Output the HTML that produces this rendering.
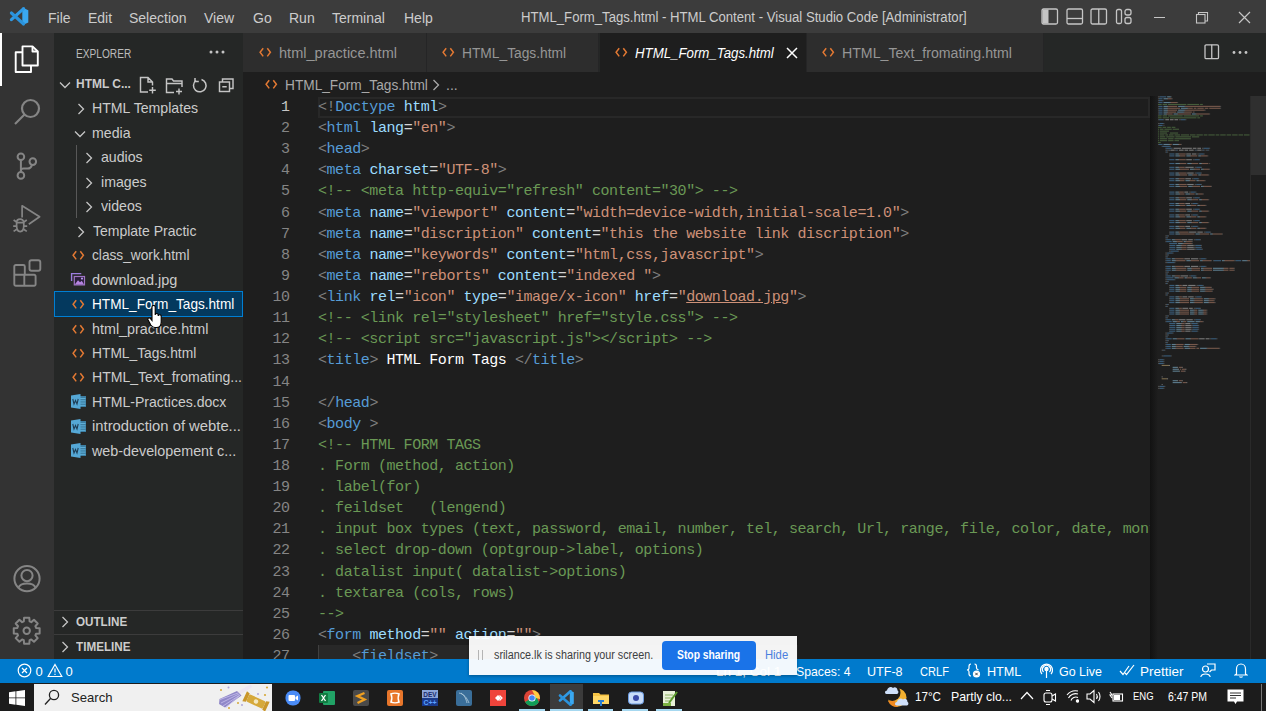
<!DOCTYPE html>
<html><head><meta charset="utf-8">
<style>
*{box-sizing:border-box}
html,body{margin:0;padding:0}
body{width:1266px;height:711px;overflow:hidden;position:relative;background:#1e1e1e;font-family:"Liberation Sans",sans-serif;color:#ccc}
.a{position:absolute;white-space:nowrap}
.ui{font-size:14px}
.mono{font-family:"Liberation Mono",monospace;font-size:15px;letter-spacing:-0.44px;white-space:pre}
</style></head><body>
<div class="a" style="left:0;top:0;width:1266px;height:33px;background:#3c3c3c"></div>
<svg class="a" style="left:0;top:0" width="34" height="33" viewBox="0 0 34 33"><path d="M22.3 7.4 L28.3 10.2 V22.4 L22.3 25.2 Z" fill="#3aa8f0"/><path d="M23.6 8.6 L11.4 19.6" stroke="#2f9be6" stroke-width="3.1" stroke-linecap="round"/><path d="M23.6 24 L11.4 13" stroke="#2b93dc" stroke-width="3.1" stroke-linecap="round"/></svg>
<span class="a" style="left:48px;top:9.5px;font-size:14px;color:#cccccc">File</span>
<span class="a" style="left:88px;top:9.5px;font-size:14px;color:#cccccc">Edit</span>
<span class="a" style="left:129px;top:9.5px;font-size:14px;color:#cccccc">Selection</span>
<span class="a" style="left:204px;top:9.5px;font-size:14px;color:#cccccc">View</span>
<span class="a" style="left:253px;top:9.5px;font-size:14px;color:#cccccc">Go</span>
<span class="a" style="left:289px;top:9.5px;font-size:14px;color:#cccccc">Run</span>
<span class="a" style="left:332px;top:9.5px;font-size:14px;color:#cccccc">Terminal</span>
<span class="a" style="left:404px;top:9.5px;font-size:14px;color:#cccccc">Help</span>
<span class="a" style="left:521px;top:9px;font-size:14px;color:#cccccc;transform:scaleX(0.9390);transform-origin:0 0">HTML_Form_Tags.html - HTML Content - Visual Studio Code [Administrator]</span>
<svg class="a" style="left:1041px;top:8px" width="18" height="17" viewBox="0 0 18 17" fill="none" stroke="#c5c5c5" stroke-width="1.3"><rect x="1" y="1" width="15.5" height="15" rx="1.5"/><rect x="1.5" y="1.5" width="6" height="14" fill="#c5c5c5" stroke="none"/></svg>
<svg class="a" style="left:1066px;top:8px" width="18" height="17" viewBox="0 0 18 17" fill="none" stroke="#c5c5c5" stroke-width="1.3"><rect x="1" y="1" width="15.5" height="15" rx="1.5"/><path d="M1 10.5 H16.5"/></svg>
<svg class="a" style="left:1090px;top:8px" width="18" height="17" viewBox="0 0 18 17" fill="none" stroke="#c5c5c5" stroke-width="1.3"><rect x="1" y="1" width="15.5" height="15" rx="1.5"/><path d="M8.75 1 V16"/></svg>
<svg class="a" style="left:1115px;top:8px" width="18" height="17" viewBox="0 0 18 17" fill="none" stroke="#c5c5c5" stroke-width="1.3"><rect x="1.5" y="1.5" width="5" height="14" rx="1.5"/><rect x="10" y="1.5" width="6" height="5.5" rx="2"/><rect x="10" y="9.5" width="6" height="6" rx="2"/></svg>
<div class="a" style="left:1154px;top:17px;width:11px;height:1px;background:#c5c5c5"></div>
<svg class="a" style="left:1195px;top:11px" width="14" height="13" viewBox="0 0 14 13" fill="none" stroke="#c5c5c5" stroke-width="1.1"><rect x="1.5" y="3.5" width="8.5" height="8.5"/><path d="M3.5 3.5 V1.5 H12.5 V10 H10"/></svg>
<svg class="a" style="left:1238px;top:11px" width="13" height="13" viewBox="0 0 13 13" stroke="#c5c5c5" stroke-width="1.2"><path d="M1 1 L12 12 M12 1 L1 12"/></svg>
<div class="a" style="left:0;top:33px;width:54px;height:626px;background:#333333"></div>
<div class="a" style="left:0;top:33px;width:2px;height:53px;background:#fff"></div>
<svg class="a" style="left:13px;top:43px" width="28" height="32" viewBox="0 0 28 32" fill="none" stroke="#fff" stroke-width="1.9" stroke-linejoin="round"><path d="M9.5 9.2 H2.7 V29 H18 V22.5"/><path d="M9.5 3.4 H19.5 L24.8 8.5 V22.5 H9.5 Z"/><path d="M19.5 3.4 V8.5 H24.8"/></svg>
<svg class="a" style="left:13px;top:97px" width="30" height="30" viewBox="0 0 30 30" fill="none" stroke="#858585" stroke-width="2.2" stroke-linejoin="round"><circle cx="17.5" cy="11.5" r="8.5"/><path d="M11.5 17.5 L2 27"/></svg>
<svg class="a" style="left:14px;top:151px" width="28" height="30" viewBox="0 0 28 30" fill="none" stroke="#858585" stroke-width="2.0" stroke-linejoin="round"><circle cx="6.9" cy="5.8" r="3.3"/><circle cx="6.9" cy="24.4" r="3.3"/><circle cx="18.8" cy="10.6" r="3.3"/><path d="M6.9 9.1 V21.1"/><path d="M18 13.9 C17.2 16.6 16 17.6 13.5 17.6 H9.5 C8 17.6 6.9 18.6 6.9 20"/></svg>
<svg class="a" style="left:12px;top:204px" width="32" height="30" viewBox="0 0 32 30" fill="none" stroke="#858585" stroke-width="1.7" stroke-linejoin="round"><path d="M10.1 13.4 V1.8 L27.6 12.8 L16.8 20.2"/><path d="M4.6 21.3 C4.6 25 6 27.6 8.2 27.6 C10.4 27.6 11.8 25 11.8 21.3 V18.8 C11.8 16.6 10.2 15.2 8.2 15.2 C6.2 15.2 4.6 16.6 4.6 18.8 Z"/><path d="M4.6 18.6 H11.8 M1.6 16 L4.6 18 M14.8 16 L11.8 18 M1.2 22.2 H4.6 M11.8 22.2 H15.2 M1.6 27.4 L4.8 25.2 M14.8 27.4 L11.6 25.2"/></svg>
<svg class="a" style="left:13px;top:257px" width="30" height="30" viewBox="0 0 30 30" fill="none" stroke="#858585" stroke-width="1.9" stroke-linejoin="round"><path d="M11.8 17.7 V9.5 a1.5 1.5 0 0 0 -1.5 -1.5 H2.8 a1.5 1.5 0 0 0 -1.5 1.5 V27.2 a1.5 1.5 0 0 0 1.5 1.5 H21.1 a1.5 1.5 0 0 0 1.5 -1.5 V19.2 a1.5 1.5 0 0 0 -1.5 -1.5 H1.3 M11.3 17.7 V28.7"/><rect x="16.5" y="3.2" width="10.8" height="10.6" rx="2"/></svg>
<svg class="a" style="left:11px;top:563px" width="32" height="32" viewBox="0 0 32 32" fill="none" stroke="#858585" stroke-width="2.0" stroke-linejoin="round"><circle cx="16" cy="15.6" r="12.6"/><circle cx="16" cy="12.6" r="5.6"/><path d="M7.5 24.6 C9.5 19.2 22.5 19.2 24.5 24.6"/></svg>
<svg class="a" style="left:11px;top:615px" width="32" height="32" viewBox="0 0 32 32" fill="none" stroke="#858585" stroke-width="2.0" stroke-linejoin="round"><path d="M12.80 6.44 L13.08 2.86 L18.32 2.86 L18.60 6.44 L20.27 7.13 L22.99 4.80 L26.70 8.51 L24.37 11.23 L25.06 12.90 L28.64 13.18 L28.64 18.42 L25.06 18.70 L24.37 20.37 L26.70 23.09 L22.99 26.80 L20.27 24.47 L18.60 25.16 L18.32 28.74 L13.08 28.74 L12.80 25.16 L11.13 24.47 L8.41 26.80 L4.70 23.09 L7.03 20.37 L6.34 18.70 L2.76 18.42 L2.76 13.18 L6.34 12.90 L7.03 11.23 L4.70 8.51 L8.41 4.80 L11.13 7.13 Z"/><circle cx="15.7" cy="15.8" r="3.2"/></svg>
<div class="a" style="left:54px;top:33px;width:189px;height:626px;background:#252726"></div>
<span class="a" style="left:76px;top:47px;font-size:12.5px;color:#bbbbbb;transform:scaleX(0.8118);transform-origin:0 0">EXPLORER</span>
<svg class="a" style="left:209px;top:49px" width="16" height="6" viewBox="0 0 16 6" fill="#c5c5c5"><circle cx="2" cy="3" r="1.5"/><circle cx="8" cy="3" r="1.5"/><circle cx="14" cy="3" r="1.5"/></svg>
<svg class="a" style="left:58px;top:80px" width="14" height="10" viewBox="0 0 14 10" fill="none" stroke="#c5c5c5" stroke-width="1.3"><path d="M2 2.5 L7 7.5 L12 2.5"/></svg>
<span class="a" style="left:76px;top:76px;font-size:13px;font-weight:bold;color:#cccccc;transform:scaleX(0.9190);transform-origin:0 0">HTML C...</span>
<svg class="a" style="left:139px;top:76px" width="18" height="18" viewBox="0 0 18 18" fill="none" stroke="#c5c5c5" stroke-width="1.45"><path d="M9 16 H1.5 V1.5 H9 L13.5 6 V9.5 M9 1.5 V6 H13.5 M13.5 11 V17.5 M10.2 14.2 H16.8"/></svg>
<svg class="a" style="left:165px;top:76.5px" width="19" height="18" viewBox="0 0 19 18" fill="none" stroke="#c5c5c5" stroke-width="1.45"><path d="M9 15.5 H1.5 V2 H7 L8.5 4 H17 V10 M1.5 6.5 H17 M14 11.5 V17.5 M11 14.5 H17"/></svg>
<svg class="a" style="left:192px;top:76.5px" width="16" height="17" viewBox="0 0 16 17" fill="none" stroke="#c5c5c5" stroke-width="1.5"><path d="M4 3.5 A6.3 6.3 0 1 0 9.5 2.5"/><path d="M3 1 V4.5 H6.8" /></svg>
<svg class="a" style="left:218px;top:76.5px" width="17" height="16" viewBox="0 0 17 16" fill="none" stroke="#c5c5c5" stroke-width="1.45"><rect x="1.5" y="5" width="10" height="9.5"/><path d="M4.5 5 V2 H15 V11.5 H11.5 M4.3 9.7 H8.7"/></svg>
<svg class="a" style="left:76px;top:102px" width="10" height="14" viewBox="0 0 10 14" fill="none" stroke="#c5c5c5" stroke-width="1.3"><path d="M2.5 2 L7.5 7 L2.5 12"/></svg>
<span class="a" style="left:92.3px;top:100.4px;font-size:14.8px;color:#cccccc;transform:scaleX(0.9554);transform-origin:0 0">HTML Templates</span>
<svg class="a" style="left:72.5px;top:129px" width="14" height="10" viewBox="0 0 14 10" fill="none" stroke="#c5c5c5" stroke-width="1.3"><path d="M2 2.5 L7 7.5 L12 2.5"/></svg>
<span class="a" style="left:92.3px;top:124.8px;font-size:14.8px;color:#cccccc;transform:scaleX(0.9557);transform-origin:0 0">media</span>
<svg class="a" style="left:84px;top:151px" width="10" height="14" viewBox="0 0 10 14" fill="none" stroke="#c5c5c5" stroke-width="1.3"><path d="M2.5 2 L7.5 7 L2.5 12"/></svg>
<span class="a" style="left:100.5px;top:149.3px;font-size:14.8px;color:#cccccc;transform:scaleX(0.9557);transform-origin:0 0">audios</span>
<svg class="a" style="left:84px;top:176px" width="10" height="14" viewBox="0 0 10 14" fill="none" stroke="#c5c5c5" stroke-width="1.3"><path d="M2.5 2 L7.5 7 L2.5 12"/></svg>
<span class="a" style="left:100.5px;top:173.7px;font-size:14.8px;color:#cccccc;transform:scaleX(0.9557);transform-origin:0 0">images</span>
<svg class="a" style="left:84px;top:200px" width="10" height="14" viewBox="0 0 10 14" fill="none" stroke="#c5c5c5" stroke-width="1.3"><path d="M2.5 2 L7.5 7 L2.5 12"/></svg>
<span class="a" style="left:100.5px;top:198.2px;font-size:14.8px;color:#cccccc;transform:scaleX(0.9557);transform-origin:0 0">videos</span>
<svg class="a" style="left:76px;top:225px" width="10" height="14" viewBox="0 0 10 14" fill="none" stroke="#c5c5c5" stroke-width="1.3"><path d="M2.5 2 L7.5 7 L2.5 12"/></svg>
<span class="a" style="left:92.7px;top:222.7px;font-size:14.8px;color:#cccccc;transform:scaleX(0.9460);transform-origin:0 0">Template Practic</span>
<svg class="a" style="left:71.5px;top:250px" width="13" height="11" viewBox="0 0 13 11" fill="none" stroke="#e37933" stroke-width="1.5"><path d="M4.2 1.2 L1.1 5.3 L4.2 9.4 M8.3 1.2 L11.4 5.3 L8.3 9.4"/></svg>
<span class="a" style="left:92.3px;top:247.1px;font-size:14.8px;color:#cccccc;transform:scaleX(0.9263);transform-origin:0 0">class_work.html</span>
<svg class="a" style="left:70px;top:272px" width="16" height="14" viewBox="0 0 16 14"><path d="M1.6 9 V1.6 H11.3" fill="none" stroke="#9c7ee0" stroke-width="1.4"/><rect x="4.3" y="4.5" width="10.2" height="8.4" fill="#2a1f3a" stroke="#a074c4" stroke-width="1.2"/><path d="M4.8 12.4 L8 8.3 L10 10.2 L11.8 8.8 L14 12.4 Z" fill="#b583e0"/><circle cx="12" cy="6.6" r="1.1" fill="#b898f0"/></svg>
<span class="a" style="left:92.3px;top:271.6px;font-size:14.8px;color:#cccccc;transform:scaleX(0.9786);transform-origin:0 0">download.jpg</span>
<div class="a" style="left:54px;top:291.0px;width:189px;height:26px;background:#04395e;border:1px solid #007fd4"></div>
<svg class="a" style="left:71.5px;top:299px" width="13" height="11" viewBox="0 0 13 11" fill="none" stroke="#e37933" stroke-width="1.5"><path d="M4.2 1.2 L1.1 5.3 L4.2 9.4 M8.3 1.2 L11.4 5.3 L8.3 9.4"/></svg>
<span class="a" style="left:92.3px;top:296.0px;font-size:14.8px;color:#ffffff;transform:scaleX(0.9204);transform-origin:0 0">HTML_Form_Tags.html</span>
<svg class="a" style="left:71.5px;top:324px" width="13" height="11" viewBox="0 0 13 11" fill="none" stroke="#e37933" stroke-width="1.5"><path d="M4.2 1.2 L1.1 5.3 L4.2 9.4 M8.3 1.2 L11.4 5.3 L8.3 9.4"/></svg>
<span class="a" style="left:92.3px;top:320.5px;font-size:14.8px;color:#cccccc;transform:scaleX(0.9692);transform-origin:0 0">html_practice.html</span>
<svg class="a" style="left:71.5px;top:348px" width="13" height="11" viewBox="0 0 13 11" fill="none" stroke="#e37933" stroke-width="1.5"><path d="M4.2 1.2 L1.1 5.3 L4.2 9.4 M8.3 1.2 L11.4 5.3 L8.3 9.4"/></svg>
<span class="a" style="left:92.3px;top:345.0px;font-size:14.8px;color:#cccccc;transform:scaleX(0.9319);transform-origin:0 0">HTML_Tags.html</span>
<svg class="a" style="left:71.5px;top:372px" width="13" height="11" viewBox="0 0 13 11" fill="none" stroke="#e37933" stroke-width="1.5"><path d="M4.2 1.2 L1.1 5.3 L4.2 9.4 M8.3 1.2 L11.4 5.3 L8.3 9.4"/></svg>
<span class="a" style="left:92.3px;top:369.4px;font-size:14.8px;color:#cccccc;transform:scaleX(0.9500);transform-origin:0 0">HTML_Text_fromating...</span>
<svg class="a" style="left:70.5px;top:394px" width="16" height="15" viewBox="0 0 16 15"><rect x="8" y="2" width="7" height="11" fill="#3d7fa3"/><path d="M9 4.5 H14.5 M9 6.8 H14.5 M9 9.1 H14.5 M9 11.4 H14.5" stroke="#5fb0d8" stroke-width="1"/><path d="M0 1.6 L9.5 0 V15 L0 13.4 Z" fill="#55a8d6"/><path d="M1.8 5 L3 10 L4.5 6.5 L6 10 L7.2 5" stroke="#1f3f58" stroke-width="1.1" fill="none"/></svg>
<span class="a" style="left:92.3px;top:393.9px;font-size:14.8px;color:#cccccc;transform:scaleX(0.9500);transform-origin:0 0">HTML-Practices.docx</span>
<svg class="a" style="left:70.5px;top:419px" width="16" height="15" viewBox="0 0 16 15"><rect x="8" y="2" width="7" height="11" fill="#3d7fa3"/><path d="M9 4.5 H14.5 M9 6.8 H14.5 M9 9.1 H14.5 M9 11.4 H14.5" stroke="#5fb0d8" stroke-width="1"/><path d="M0 1.6 L9.5 0 V15 L0 13.4 Z" fill="#55a8d6"/><path d="M1.8 5 L3 10 L4.5 6.5 L6 10 L7.2 5" stroke="#1f3f58" stroke-width="1.1" fill="none"/></svg>
<span class="a" style="left:92.3px;top:418.3px;font-size:14.8px;color:#cccccc;transform:scaleX(1.0005);transform-origin:0 0">introduction of webte...</span>
<svg class="a" style="left:70.5px;top:443px" width="16" height="15" viewBox="0 0 16 15"><rect x="8" y="2" width="7" height="11" fill="#3d7fa3"/><path d="M9 4.5 H14.5 M9 6.8 H14.5 M9 9.1 H14.5 M9 11.4 H14.5" stroke="#5fb0d8" stroke-width="1"/><path d="M0 1.6 L9.5 0 V15 L0 13.4 Z" fill="#55a8d6"/><path d="M1.8 5 L3 10 L4.5 6.5 L6 10 L7.2 5" stroke="#1f3f58" stroke-width="1.1" fill="none"/></svg>
<span class="a" style="left:92.3px;top:442.8px;font-size:14.8px;color:#cccccc;transform:scaleX(0.9681);transform-origin:0 0">web-developement c...</span>
<div class="a" style="left:76px;top:145px;width:1px;height:73px;background:#585858"></div>
<svg class="a" style="left:147px;top:305px" width="18" height="24" viewBox="0 0 18 24"><path d="M5 2 a1.6 1.6 0 0 1 3.2 0 V10 a1.5 1.5 0 0 1 3 0 V11 a1.5 1.5 0 0 1 3 0.5 V17 C14.2 20.5 12.5 22.5 9.5 22.5 H8 C5.8 22.5 4.8 21.5 3.8 20 L1 14.8 a1.4 1.4 0 0 1 2.3-1.5 L5 15.5 Z" fill="#fff" stroke="#000" stroke-width="1.1"/></svg>
<div class="a" style="left:54px;top:610px;width:189px;height:1px;background:#3c3c3c"></div>
<div class="a" style="left:54px;top:634px;width:189px;height:1px;background:#3c3c3c"></div>
<svg class="a" style="left:60px;top:615px" width="10" height="14" viewBox="0 0 10 14" fill="none" stroke="#c5c5c5" stroke-width="1.3"><path d="M2.5 2 L7.5 7 L2.5 12"/></svg>
<span class="a" style="left:75.5px;top:615px;font-size:12.5px;font-weight:bold;color:#cccccc;transform:scaleX(0.9330);transform-origin:0 0">OUTLINE</span>
<svg class="a" style="left:60px;top:640px" width="10" height="14" viewBox="0 0 10 14" fill="none" stroke="#c5c5c5" stroke-width="1.3"><path d="M2.5 2 L7.5 7 L2.5 12"/></svg>
<span class="a" style="left:76.3px;top:640px;font-size:12.5px;font-weight:bold;color:#cccccc;transform:scaleX(0.9353);transform-origin:0 0">TIMELINE</span>
<div class="a" style="left:243px;top:33px;width:1023px;height:39px;background:#252726"></div>
<div class="a" style="left:243px;top:33px;width:183.7px;height:39px;background:#2d2d2d;border-right:1px solid #252526"></div>
<svg class="a" style="left:258.5px;top:47px" width="13" height="11" viewBox="0 0 13 11" fill="none" stroke="#e37933" stroke-width="1.5"><path d="M4.2 1.2 L1.1 5.3 L4.2 9.4 M8.3 1.2 L11.4 5.3 L8.3 9.4"/></svg>
<span class="a" style="left:278.5px;top:45px;font-size:14px;color:#969696;transform:scaleX(1.0387);transform-origin:0 0">html_practice.html</span>
<div class="a" style="left:426.7px;top:33px;width:172.8px;height:39px;background:#2d2d2d;border-right:1px solid #252526"></div>
<svg class="a" style="left:442.2px;top:47px" width="13" height="11" viewBox="0 0 13 11" fill="none" stroke="#e37933" stroke-width="1.5"><path d="M4.2 1.2 L1.1 5.3 L4.2 9.4 M8.3 1.2 L11.4 5.3 L8.3 9.4"/></svg>
<span class="a" style="left:462.2px;top:45px;font-size:14px;color:#969696;transform:scaleX(0.9840);transform-origin:0 0">HTML_Tags.html</span>
<div class="a" style="left:599.5px;top:33px;width:207px;height:39px;background:#1e1e1e;border-right:1px solid #252526"></div>
<svg class="a" style="left:615.0px;top:47px" width="13" height="11" viewBox="0 0 13 11" fill="none" stroke="#e37933" stroke-width="1.5"><path d="M4.2 1.2 L1.1 5.3 L4.2 9.4 M8.3 1.2 L11.4 5.3 L8.3 9.4"/></svg>
<span class="a" style="left:635.0px;top:45px;font-size:14px;color:#ffffff;font-style:italic;transform:scaleX(0.947);transform-origin:0 0">HTML_Form_Tags.html</span>
<svg class="a" style="left:785.5px;top:47px" width="12" height="12" viewBox="0 0 12 12" stroke="#fff" stroke-width="1.5"><path d="M1 1 L11 11 M11 1 L1 11"/></svg>
<div class="a" style="left:806.5px;top:33px;width:237.5px;height:39px;background:#2d2d2d;border-right:1px solid #252526"></div>
<svg class="a" style="left:822.0px;top:47px" width="13" height="11" viewBox="0 0 13 11" fill="none" stroke="#e37933" stroke-width="1.5"><path d="M4.2 1.2 L1.1 5.3 L4.2 9.4 M8.3 1.2 L11.4 5.3 L8.3 9.4"/></svg>
<span class="a" style="left:842.0px;top:45px;font-size:14px;color:#969696;transform:scaleX(1.0110);transform-origin:0 0">HTML_Text_fromating.html</span>
<svg class="a" style="left:1204px;top:44px" width="16" height="16" viewBox="0 0 16 16" fill="none" stroke="#c5c5c5" stroke-width="1.3"><rect x="1" y="0.8" width="13.5" height="13.8" rx="1.2"/><path d="M7.75 0.8 V14.6"/></svg>
<svg class="a" style="left:1232px;top:50px" width="16" height="5" viewBox="0 0 16 5" fill="#c5c5c5"><circle cx="2" cy="2.5" r="1.4"/><circle cx="8" cy="2.5" r="1.4"/><circle cx="14" cy="2.5" r="1.4"/></svg>
<svg class="a" style="left:265px;top:79px" width="13" height="11" viewBox="0 0 13 11" fill="none" stroke="#e37933" stroke-width="1.5"><path d="M4.2 1.2 L1.1 5.3 L4.2 9.4 M8.3 1.2 L11.4 5.3 L8.3 9.4"/></svg>
<span class="a" style="left:285px;top:77px;font-size:14px;color:#a9a9a9;transform:scaleX(0.977);transform-origin:0 0">HTML_Form_Tags.html</span>
<svg class="a" style="left:432px;top:79px" width="8" height="12" viewBox="0 0 8 12" fill="none" stroke="#a9a9a9" stroke-width="1.3"><path d="M1.5 1 L6.5 6 L1.5 11"/></svg>
<span class="a" style="left:446px;top:77px;font-size:14px;color:#a9a9a9">...</span>
<div class="a" style="left:318px;top:96.5px;width:832px;height:21px;border:2px solid #282828"></div>
<div class="a" style="left:318px;top:644.8px;width:480px;height:21.1px;background:#282828"></div>
<div class="a" style="left:318px;top:644.8px;width:1px;height:21.1px;background:#404040"></div>
<div class="a mono" style="left:241.5px;width:48px;text-align:right;top:96.95px;line-height:21.12px;color:#c6c6c6">1</div>
<div class="a mono" style="left:318.0px;top:96.95px;line-height:21.12px;width:832px;overflow:hidden"><span style="color:#808080">&lt;!</span><span style="color:#569cd6">Doctype</span><span style="color:#d4d4d4"> </span><span style="color:#9cdcfe">html</span><span style="color:#808080">&gt;</span></div>
<div class="a mono" style="left:241.5px;width:48px;text-align:right;top:118.07px;line-height:21.12px;color:#858585">2</div>
<div class="a mono" style="left:318.0px;top:118.07px;line-height:21.12px;width:832px;overflow:hidden"><span style="color:#808080">&lt;</span><span style="color:#569cd6">html</span><span style="color:#d4d4d4"> </span><span style="color:#9cdcfe">lang</span><span style="color:#d4d4d4">=</span><span style="color:#ce9178">&quot;en&quot;</span><span style="color:#808080">&gt;</span></div>
<div class="a mono" style="left:241.5px;width:48px;text-align:right;top:139.19px;line-height:21.12px;color:#858585">3</div>
<div class="a mono" style="left:318.0px;top:139.19px;line-height:21.12px;width:832px;overflow:hidden"><span style="color:#808080">&lt;</span><span style="color:#569cd6">head</span><span style="color:#808080">&gt;</span></div>
<div class="a mono" style="left:241.5px;width:48px;text-align:right;top:160.31px;line-height:21.12px;color:#858585">4</div>
<div class="a mono" style="left:318.0px;top:160.31px;line-height:21.12px;width:832px;overflow:hidden"><span style="color:#808080">&lt;</span><span style="color:#569cd6">meta</span><span style="color:#d4d4d4"> </span><span style="color:#9cdcfe">charset</span><span style="color:#d4d4d4">=</span><span style="color:#ce9178">&quot;UTF-8&quot;</span><span style="color:#808080">&gt;</span></div>
<div class="a mono" style="left:241.5px;width:48px;text-align:right;top:181.43px;line-height:21.12px;color:#858585">5</div>
<div class="a mono" style="left:318.0px;top:181.43px;line-height:21.12px;width:832px;overflow:hidden"><span style="color:#6a9955">&lt;!-- &lt;meta http-equiv=&quot;refresh&quot; content=&quot;30&quot;&gt; --&gt;</span></div>
<div class="a mono" style="left:241.5px;width:48px;text-align:right;top:202.55px;line-height:21.12px;color:#858585">6</div>
<div class="a mono" style="left:318.0px;top:202.55px;line-height:21.12px;width:832px;overflow:hidden"><span style="color:#808080">&lt;</span><span style="color:#569cd6">meta</span><span style="color:#d4d4d4"> </span><span style="color:#9cdcfe">name</span><span style="color:#d4d4d4">=</span><span style="color:#ce9178">&quot;viewport&quot;</span><span style="color:#d4d4d4"> </span><span style="color:#9cdcfe">content</span><span style="color:#d4d4d4">=</span><span style="color:#ce9178">&quot;width=device-width,initial-scale=1.0&quot;</span><span style="color:#808080">&gt;</span></div>
<div class="a mono" style="left:241.5px;width:48px;text-align:right;top:223.67px;line-height:21.12px;color:#858585">7</div>
<div class="a mono" style="left:318.0px;top:223.67px;line-height:21.12px;width:832px;overflow:hidden"><span style="color:#808080">&lt;</span><span style="color:#569cd6">meta</span><span style="color:#d4d4d4"> </span><span style="color:#9cdcfe">name</span><span style="color:#d4d4d4">=</span><span style="color:#ce9178">&quot;discription&quot;</span><span style="color:#d4d4d4"> </span><span style="color:#9cdcfe">content</span><span style="color:#d4d4d4">=</span><span style="color:#ce9178">&quot;this the website link discription&quot;</span><span style="color:#808080">&gt;</span></div>
<div class="a mono" style="left:241.5px;width:48px;text-align:right;top:244.79px;line-height:21.12px;color:#858585">8</div>
<div class="a mono" style="left:318.0px;top:244.79px;line-height:21.12px;width:832px;overflow:hidden"><span style="color:#808080">&lt;</span><span style="color:#569cd6">meta</span><span style="color:#d4d4d4"> </span><span style="color:#9cdcfe">name</span><span style="color:#d4d4d4">=</span><span style="color:#ce9178">&quot;keywords&quot;</span><span style="color:#d4d4d4"> </span><span style="color:#9cdcfe">content</span><span style="color:#d4d4d4">=</span><span style="color:#ce9178">&quot;html,css,javascript&quot;</span><span style="color:#808080">&gt;</span></div>
<div class="a mono" style="left:241.5px;width:48px;text-align:right;top:265.91px;line-height:21.12px;color:#858585">9</div>
<div class="a mono" style="left:318.0px;top:265.91px;line-height:21.12px;width:832px;overflow:hidden"><span style="color:#808080">&lt;</span><span style="color:#569cd6">meta</span><span style="color:#d4d4d4"> </span><span style="color:#9cdcfe">name</span><span style="color:#d4d4d4">=</span><span style="color:#ce9178">&quot;reborts&quot;</span><span style="color:#d4d4d4"> </span><span style="color:#9cdcfe">content</span><span style="color:#d4d4d4">=</span><span style="color:#ce9178">&quot;indexed &quot;</span><span style="color:#808080">&gt;</span></div>
<div class="a mono" style="left:241.5px;width:48px;text-align:right;top:287.03px;line-height:21.12px;color:#858585">10</div>
<div class="a mono" style="left:318.0px;top:287.03px;line-height:21.12px;width:832px;overflow:hidden"><span style="color:#808080">&lt;</span><span style="color:#569cd6">link</span><span style="color:#d4d4d4"> </span><span style="color:#9cdcfe">rel</span><span style="color:#d4d4d4">=</span><span style="color:#ce9178">&quot;icon&quot;</span><span style="color:#d4d4d4"> </span><span style="color:#9cdcfe">type</span><span style="color:#d4d4d4">=</span><span style="color:#ce9178">&quot;image/x-icon&quot;</span><span style="color:#d4d4d4"> </span><span style="color:#9cdcfe">href</span><span style="color:#d4d4d4">=</span><span style="color:#ce9178">"<span style="text-decoration:underline">download.jpg</span>"</span><span style="color:#808080">&gt;</span></div>
<div class="a mono" style="left:241.5px;width:48px;text-align:right;top:308.15px;line-height:21.12px;color:#858585">11</div>
<div class="a mono" style="left:318.0px;top:308.15px;line-height:21.12px;width:832px;overflow:hidden"><span style="color:#6a9955">&lt;!-- &lt;link rel=&quot;stylesheet&quot; href=&quot;style.css&quot;&gt; --&gt;</span></div>
<div class="a mono" style="left:241.5px;width:48px;text-align:right;top:329.27px;line-height:21.12px;color:#858585">12</div>
<div class="a mono" style="left:318.0px;top:329.27px;line-height:21.12px;width:832px;overflow:hidden"><span style="color:#6a9955">&lt;!-- &lt;script src=&quot;javascript.js&quot;&gt;&lt;/script&gt; --&gt;</span></div>
<div class="a mono" style="left:241.5px;width:48px;text-align:right;top:350.39px;line-height:21.12px;color:#858585">13</div>
<div class="a mono" style="left:318.0px;top:350.39px;line-height:21.12px;width:832px;overflow:hidden"><span style="color:#808080">&lt;</span><span style="color:#569cd6">title</span><span style="color:#808080">&gt;</span><span style="color:#ffffff"> HTML Form Tags </span><span style="color:#808080">&lt;/</span><span style="color:#569cd6">title</span><span style="color:#808080">&gt;</span></div>
<div class="a mono" style="left:241.5px;width:48px;text-align:right;top:371.51px;line-height:21.12px;color:#858585">14</div>
<div class="a mono" style="left:318.0px;top:371.51px;line-height:21.12px;width:832px;overflow:hidden"></div>
<div class="a mono" style="left:241.5px;width:48px;text-align:right;top:392.63px;line-height:21.12px;color:#858585">15</div>
<div class="a mono" style="left:318.0px;top:392.63px;line-height:21.12px;width:832px;overflow:hidden"><span style="color:#808080">&lt;/</span><span style="color:#569cd6">head</span><span style="color:#808080">&gt;</span></div>
<div class="a mono" style="left:241.5px;width:48px;text-align:right;top:413.75px;line-height:21.12px;color:#858585">16</div>
<div class="a mono" style="left:318.0px;top:413.75px;line-height:21.12px;width:832px;overflow:hidden"><span style="color:#808080">&lt;</span><span style="color:#569cd6">body</span><span style="color:#d4d4d4"> </span><span style="color:#808080">&gt;</span></div>
<div class="a mono" style="left:241.5px;width:48px;text-align:right;top:434.87px;line-height:21.12px;color:#858585">17</div>
<div class="a mono" style="left:318.0px;top:434.87px;line-height:21.12px;width:832px;overflow:hidden"><span style="color:#6a9955">&lt;!-- HTML FORM TAGS</span></div>
<div class="a mono" style="left:241.5px;width:48px;text-align:right;top:455.99px;line-height:21.12px;color:#858585">18</div>
<div class="a mono" style="left:318.0px;top:455.99px;line-height:21.12px;width:832px;overflow:hidden"><span style="color:#6a9955">. Form (method, action)</span></div>
<div class="a mono" style="left:241.5px;width:48px;text-align:right;top:477.11px;line-height:21.12px;color:#858585">19</div>
<div class="a mono" style="left:318.0px;top:477.11px;line-height:21.12px;width:832px;overflow:hidden"><span style="color:#6a9955">. label(for)</span></div>
<div class="a mono" style="left:241.5px;width:48px;text-align:right;top:498.23px;line-height:21.12px;color:#858585">20</div>
<div class="a mono" style="left:318.0px;top:498.23px;line-height:21.12px;width:832px;overflow:hidden"><span style="color:#6a9955">. feildset   (lengend)</span></div>
<div class="a mono" style="left:241.5px;width:48px;text-align:right;top:519.35px;line-height:21.12px;color:#858585">21</div>
<div class="a mono" style="left:318.0px;top:519.35px;line-height:21.12px;width:832px;overflow:hidden"><span style="color:#6a9955">. input box types (text, password, email, number, tel, search, Url, range, file, color, date, month, week, time, datetime)</span></div>
<div class="a mono" style="left:241.5px;width:48px;text-align:right;top:540.47px;line-height:21.12px;color:#858585">22</div>
<div class="a mono" style="left:318.0px;top:540.47px;line-height:21.12px;width:832px;overflow:hidden"><span style="color:#6a9955">. select drop-down (optgroup-&gt;label, options)</span></div>
<div class="a mono" style="left:241.5px;width:48px;text-align:right;top:561.59px;line-height:21.12px;color:#858585">23</div>
<div class="a mono" style="left:318.0px;top:561.59px;line-height:21.12px;width:832px;overflow:hidden"><span style="color:#6a9955">. datalist input( datalist-&gt;options)</span></div>
<div class="a mono" style="left:241.5px;width:48px;text-align:right;top:582.71px;line-height:21.12px;color:#858585">24</div>
<div class="a mono" style="left:318.0px;top:582.71px;line-height:21.12px;width:832px;overflow:hidden"><span style="color:#6a9955">. textarea (cols, rows)</span></div>
<div class="a mono" style="left:241.5px;width:48px;text-align:right;top:603.83px;line-height:21.12px;color:#858585">25</div>
<div class="a mono" style="left:318.0px;top:603.83px;line-height:21.12px;width:832px;overflow:hidden"><span style="color:#6a9955">--&gt;</span></div>
<div class="a mono" style="left:241.5px;width:48px;text-align:right;top:624.95px;line-height:21.12px;color:#858585">26</div>
<div class="a mono" style="left:318.0px;top:624.95px;line-height:21.12px;width:832px;overflow:hidden"><span style="color:#808080">&lt;</span><span style="color:#569cd6">form</span><span style="color:#d4d4d4"> </span><span style="color:#9cdcfe">method</span><span style="color:#d4d4d4">=</span><span style="color:#ce9178">&quot;&quot;</span><span style="color:#d4d4d4"> </span><span style="color:#9cdcfe">action</span><span style="color:#d4d4d4">=</span><span style="color:#ce9178">&quot;&quot;</span><span style="color:#808080">&gt;</span></div>
<div class="a mono" style="left:241.5px;width:48px;text-align:right;top:646.07px;line-height:21.12px;color:#858585">27</div>
<div class="a mono" style="left:318.0px;top:646.07px;line-height:21.12px;width:832px;overflow:hidden"><span style="color:#d4d4d4">    </span><span style="color:#808080">&lt;</span><span style="color:#569cd6">fieldset</span><span style="color:#808080">&gt;</span></div>
<div class="a" style="left:1150px;top:96px;width:8px;height:563px;background:linear-gradient(to right,#121212,#1e1e1e)"></div>
<svg class="a" style="left:1158px;top:96px" width="92" height="320" viewBox="0 0 92 320"><rect x="0.00" y="0.30" width="1.83" height="1.1" fill="#808080" opacity="0.5"/><rect x="1.83" y="0.30" width="6.41" height="1.1" fill="#569cd6" opacity="0.5"/><rect x="9.15" y="0.30" width="3.66" height="1.1" fill="#9cdcfe" opacity="0.5"/><rect x="12.81" y="0.30" width="0.92" height="1.1" fill="#808080" opacity="0.5"/><rect x="0.00" y="2.21" width="0.92" height="1.1" fill="#808080" opacity="0.5"/><rect x="0.92" y="2.21" width="3.66" height="1.1" fill="#569cd6" opacity="0.5"/><rect x="5.49" y="2.21" width="3.66" height="1.1" fill="#9cdcfe" opacity="0.5"/><rect x="9.15" y="2.21" width="0.92" height="1.1" fill="#d4d4d4" opacity="0.5"/><rect x="10.07" y="2.21" width="3.66" height="1.1" fill="#ce9178" opacity="0.5"/><rect x="13.73" y="2.21" width="0.92" height="1.1" fill="#808080" opacity="0.5"/><rect x="0.00" y="4.11" width="0.92" height="1.1" fill="#808080" opacity="0.5"/><rect x="0.92" y="4.11" width="3.66" height="1.1" fill="#569cd6" opacity="0.5"/><rect x="4.58" y="4.11" width="0.92" height="1.1" fill="#808080" opacity="0.5"/><rect x="0.00" y="6.01" width="0.92" height="1.1" fill="#808080" opacity="0.5"/><rect x="0.92" y="6.01" width="3.66" height="1.1" fill="#569cd6" opacity="0.5"/><rect x="5.49" y="6.01" width="6.41" height="1.1" fill="#9cdcfe" opacity="0.5"/><rect x="11.89" y="6.01" width="0.92" height="1.1" fill="#d4d4d4" opacity="0.5"/><rect x="12.81" y="6.01" width="6.41" height="1.1" fill="#ce9178" opacity="0.5"/><rect x="19.21" y="6.01" width="0.92" height="1.1" fill="#808080" opacity="0.5"/><rect x="0.00" y="7.92" width="3.66" height="1.1" fill="#6a9955" opacity="0.5"/><rect x="4.58" y="7.92" width="4.58" height="1.1" fill="#6a9955" opacity="0.5"/><rect x="10.07" y="7.92" width="18.30" height="1.1" fill="#6a9955" opacity="0.5"/><rect x="29.28" y="7.92" width="11.89" height="1.1" fill="#6a9955" opacity="0.5"/><rect x="42.09" y="7.92" width="2.75" height="1.1" fill="#6a9955" opacity="0.5"/><rect x="0.00" y="9.83" width="0.92" height="1.1" fill="#808080" opacity="0.5"/><rect x="0.92" y="9.83" width="3.66" height="1.1" fill="#569cd6" opacity="0.5"/><rect x="5.49" y="9.83" width="3.66" height="1.1" fill="#9cdcfe" opacity="0.5"/><rect x="9.15" y="9.83" width="0.92" height="1.1" fill="#d4d4d4" opacity="0.5"/><rect x="10.07" y="9.83" width="9.15" height="1.1" fill="#ce9178" opacity="0.5"/><rect x="20.13" y="9.83" width="6.41" height="1.1" fill="#9cdcfe" opacity="0.5"/><rect x="26.54" y="9.83" width="0.92" height="1.1" fill="#d4d4d4" opacity="0.5"/><rect x="27.45" y="9.83" width="34.77" height="1.1" fill="#ce9178" opacity="0.5"/><rect x="62.22" y="9.83" width="0.92" height="1.1" fill="#808080" opacity="0.5"/><rect x="0.00" y="11.73" width="0.92" height="1.1" fill="#808080" opacity="0.5"/><rect x="0.92" y="11.73" width="3.66" height="1.1" fill="#569cd6" opacity="0.5"/><rect x="5.49" y="11.73" width="3.66" height="1.1" fill="#9cdcfe" opacity="0.5"/><rect x="9.15" y="11.73" width="0.92" height="1.1" fill="#d4d4d4" opacity="0.5"/><rect x="10.07" y="11.73" width="11.89" height="1.1" fill="#ce9178" opacity="0.5"/><rect x="22.88" y="11.73" width="6.41" height="1.1" fill="#9cdcfe" opacity="0.5"/><rect x="29.28" y="11.73" width="0.92" height="1.1" fill="#d4d4d4" opacity="0.5"/><rect x="30.20" y="11.73" width="4.58" height="1.1" fill="#ce9178" opacity="0.5"/><rect x="35.69" y="11.73" width="2.75" height="1.1" fill="#ce9178" opacity="0.5"/><rect x="39.34" y="11.73" width="6.41" height="1.1" fill="#ce9178" opacity="0.5"/><rect x="46.66" y="11.73" width="3.66" height="1.1" fill="#ce9178" opacity="0.5"/><rect x="51.24" y="11.73" width="10.98" height="1.1" fill="#ce9178" opacity="0.5"/><rect x="62.22" y="11.73" width="0.92" height="1.1" fill="#808080" opacity="0.5"/><rect x="0.00" y="13.64" width="0.92" height="1.1" fill="#808080" opacity="0.5"/><rect x="0.92" y="13.64" width="3.66" height="1.1" fill="#569cd6" opacity="0.5"/><rect x="5.49" y="13.64" width="3.66" height="1.1" fill="#9cdcfe" opacity="0.5"/><rect x="9.15" y="13.64" width="0.92" height="1.1" fill="#d4d4d4" opacity="0.5"/><rect x="10.07" y="13.64" width="9.15" height="1.1" fill="#ce9178" opacity="0.5"/><rect x="20.13" y="13.64" width="6.41" height="1.1" fill="#9cdcfe" opacity="0.5"/><rect x="26.54" y="13.64" width="0.92" height="1.1" fill="#d4d4d4" opacity="0.5"/><rect x="27.45" y="13.64" width="19.21" height="1.1" fill="#ce9178" opacity="0.5"/><rect x="46.66" y="13.64" width="0.92" height="1.1" fill="#808080" opacity="0.5"/><rect x="0.00" y="15.54" width="0.92" height="1.1" fill="#808080" opacity="0.5"/><rect x="0.92" y="15.54" width="3.66" height="1.1" fill="#569cd6" opacity="0.5"/><rect x="5.49" y="15.54" width="3.66" height="1.1" fill="#9cdcfe" opacity="0.5"/><rect x="9.15" y="15.54" width="0.92" height="1.1" fill="#d4d4d4" opacity="0.5"/><rect x="10.07" y="15.54" width="8.23" height="1.1" fill="#ce9178" opacity="0.5"/><rect x="19.21" y="15.54" width="6.41" height="1.1" fill="#9cdcfe" opacity="0.5"/><rect x="25.62" y="15.54" width="0.92" height="1.1" fill="#d4d4d4" opacity="0.5"/><rect x="26.54" y="15.54" width="7.32" height="1.1" fill="#ce9178" opacity="0.5"/><rect x="34.77" y="15.54" width="0.92" height="1.1" fill="#ce9178" opacity="0.5"/><rect x="35.69" y="15.54" width="0.92" height="1.1" fill="#808080" opacity="0.5"/><rect x="0.00" y="17.45" width="0.92" height="1.1" fill="#808080" opacity="0.5"/><rect x="0.92" y="17.45" width="3.66" height="1.1" fill="#569cd6" opacity="0.5"/><rect x="5.49" y="17.45" width="2.75" height="1.1" fill="#9cdcfe" opacity="0.5"/><rect x="8.23" y="17.45" width="0.92" height="1.1" fill="#d4d4d4" opacity="0.5"/><rect x="9.15" y="17.45" width="5.49" height="1.1" fill="#ce9178" opacity="0.5"/><rect x="15.55" y="17.45" width="3.66" height="1.1" fill="#9cdcfe" opacity="0.5"/><rect x="19.21" y="17.45" width="0.92" height="1.1" fill="#d4d4d4" opacity="0.5"/><rect x="20.13" y="17.45" width="12.81" height="1.1" fill="#ce9178" opacity="0.5"/><rect x="33.86" y="17.45" width="3.66" height="1.1" fill="#9cdcfe" opacity="0.5"/><rect x="37.52" y="17.45" width="0.92" height="1.1" fill="#d4d4d4" opacity="0.5"/><rect x="38.43" y="17.45" width="12.81" height="1.1" fill="#ce9178" opacity="0.5"/><rect x="51.24" y="17.45" width="0.92" height="1.1" fill="#808080" opacity="0.5"/><rect x="0.00" y="19.35" width="3.66" height="1.1" fill="#6a9955" opacity="0.5"/><rect x="4.58" y="19.35" width="4.58" height="1.1" fill="#6a9955" opacity="0.5"/><rect x="10.07" y="19.35" width="14.64" height="1.1" fill="#6a9955" opacity="0.5"/><rect x="25.62" y="19.35" width="15.55" height="1.1" fill="#6a9955" opacity="0.5"/><rect x="42.09" y="19.35" width="2.75" height="1.1" fill="#6a9955" opacity="0.5"/><rect x="0.00" y="21.26" width="3.66" height="1.1" fill="#6a9955" opacity="0.5"/><rect x="4.58" y="21.26" width="6.41" height="1.1" fill="#6a9955" opacity="0.5"/><rect x="11.89" y="21.26" width="26.54" height="1.1" fill="#6a9955" opacity="0.5"/><rect x="39.34" y="21.26" width="2.75" height="1.1" fill="#6a9955" opacity="0.5"/><rect x="0.00" y="23.16" width="0.92" height="1.1" fill="#808080" opacity="0.5"/><rect x="0.92" y="23.16" width="4.58" height="1.1" fill="#569cd6" opacity="0.5"/><rect x="5.49" y="23.16" width="0.92" height="1.1" fill="#808080" opacity="0.5"/><rect x="7.32" y="23.16" width="3.66" height="1.1" fill="#d4d4d4" opacity="0.5"/><rect x="11.89" y="23.16" width="3.66" height="1.1" fill="#d4d4d4" opacity="0.5"/><rect x="16.47" y="23.16" width="3.66" height="1.1" fill="#d4d4d4" opacity="0.5"/><rect x="21.05" y="23.16" width="1.83" height="1.1" fill="#808080" opacity="0.5"/><rect x="22.88" y="23.16" width="4.58" height="1.1" fill="#569cd6" opacity="0.5"/><rect x="27.45" y="23.16" width="0.92" height="1.1" fill="#808080" opacity="0.5"/><rect x="0.00" y="26.97" width="1.83" height="1.1" fill="#808080" opacity="0.5"/><rect x="1.83" y="26.97" width="3.66" height="1.1" fill="#569cd6" opacity="0.5"/><rect x="5.49" y="26.97" width="0.92" height="1.1" fill="#808080" opacity="0.5"/><rect x="0.00" y="28.88" width="0.92" height="1.1" fill="#808080" opacity="0.5"/><rect x="0.92" y="28.88" width="3.66" height="1.1" fill="#569cd6" opacity="0.5"/><rect x="5.49" y="28.88" width="0.92" height="1.1" fill="#808080" opacity="0.5"/><rect x="0.00" y="30.78" width="3.66" height="1.1" fill="#6a9955" opacity="0.5"/><rect x="4.58" y="30.78" width="3.66" height="1.1" fill="#6a9955" opacity="0.5"/><rect x="9.15" y="30.78" width="3.66" height="1.1" fill="#6a9955" opacity="0.5"/><rect x="13.73" y="30.78" width="3.66" height="1.1" fill="#6a9955" opacity="0.5"/><rect x="0.00" y="32.68" width="0.92" height="1.1" fill="#6a9955" opacity="0.5"/><rect x="1.83" y="32.68" width="3.66" height="1.1" fill="#6a9955" opacity="0.5"/><rect x="6.41" y="32.68" width="7.32" height="1.1" fill="#6a9955" opacity="0.5"/><rect x="14.64" y="32.68" width="6.41" height="1.1" fill="#6a9955" opacity="0.5"/><rect x="0.00" y="34.59" width="0.92" height="1.1" fill="#6a9955" opacity="0.5"/><rect x="1.83" y="34.59" width="9.15" height="1.1" fill="#6a9955" opacity="0.5"/><rect x="0.00" y="36.49" width="0.92" height="1.1" fill="#6a9955" opacity="0.5"/><rect x="1.83" y="36.49" width="7.32" height="1.1" fill="#6a9955" opacity="0.5"/><rect x="11.89" y="36.49" width="8.23" height="1.1" fill="#6a9955" opacity="0.5"/><rect x="0.00" y="38.40" width="0.92" height="1.1" fill="#6a9955" opacity="0.5"/><rect x="1.83" y="38.40" width="4.58" height="1.1" fill="#6a9955" opacity="0.5"/><rect x="7.32" y="38.40" width="2.75" height="1.1" fill="#6a9955" opacity="0.5"/><rect x="10.98" y="38.40" width="4.58" height="1.1" fill="#6a9955" opacity="0.5"/><rect x="16.47" y="38.40" width="5.49" height="1.1" fill="#6a9955" opacity="0.5"/><rect x="22.88" y="38.40" width="8.23" height="1.1" fill="#6a9955" opacity="0.5"/><rect x="32.02" y="38.40" width="5.49" height="1.1" fill="#6a9955" opacity="0.5"/><rect x="38.43" y="38.40" width="6.41" height="1.1" fill="#6a9955" opacity="0.5"/><rect x="45.75" y="38.40" width="3.66" height="1.1" fill="#6a9955" opacity="0.5"/><rect x="50.33" y="38.40" width="6.41" height="1.1" fill="#6a9955" opacity="0.5"/><rect x="57.65" y="38.40" width="3.66" height="1.1" fill="#6a9955" opacity="0.5"/><rect x="62.22" y="38.40" width="5.49" height="1.1" fill="#6a9955" opacity="0.5"/><rect x="68.62" y="38.40" width="4.58" height="1.1" fill="#6a9955" opacity="0.5"/><rect x="74.12" y="38.40" width="5.49" height="1.1" fill="#6a9955" opacity="0.5"/><rect x="80.52" y="38.40" width="4.58" height="1.1" fill="#6a9955" opacity="0.5"/><rect x="86.01" y="38.40" width="5.49" height="1.1" fill="#6a9955" opacity="0.5"/><rect x="0.00" y="40.30" width="0.92" height="1.1" fill="#6a9955" opacity="0.5"/><rect x="1.83" y="40.30" width="5.49" height="1.1" fill="#6a9955" opacity="0.5"/><rect x="8.23" y="40.30" width="8.23" height="1.1" fill="#6a9955" opacity="0.5"/><rect x="17.39" y="40.30" width="15.55" height="1.1" fill="#6a9955" opacity="0.5"/><rect x="33.86" y="40.30" width="7.32" height="1.1" fill="#6a9955" opacity="0.5"/><rect x="0.00" y="42.21" width="0.92" height="1.1" fill="#6a9955" opacity="0.5"/><rect x="1.83" y="42.21" width="7.32" height="1.1" fill="#6a9955" opacity="0.5"/><rect x="10.07" y="42.21" width="5.49" height="1.1" fill="#6a9955" opacity="0.5"/><rect x="16.47" y="42.21" width="16.47" height="1.1" fill="#6a9955" opacity="0.5"/><rect x="0.00" y="44.11" width="0.92" height="1.1" fill="#6a9955" opacity="0.5"/><rect x="1.83" y="44.11" width="7.32" height="1.1" fill="#6a9955" opacity="0.5"/><rect x="10.07" y="44.11" width="5.49" height="1.1" fill="#6a9955" opacity="0.5"/><rect x="16.47" y="44.11" width="4.58" height="1.1" fill="#6a9955" opacity="0.5"/><rect x="0.00" y="46.02" width="2.75" height="1.1" fill="#6a9955" opacity="0.5"/><rect x="0.00" y="47.92" width="0.92" height="1.1" fill="#808080" opacity="0.5"/><rect x="0.92" y="47.92" width="3.66" height="1.1" fill="#569cd6" opacity="0.5"/><rect x="5.49" y="47.92" width="5.49" height="1.1" fill="#9cdcfe" opacity="0.5"/><rect x="10.98" y="47.92" width="0.92" height="1.1" fill="#d4d4d4" opacity="0.5"/><rect x="11.89" y="47.92" width="1.83" height="1.1" fill="#ce9178" opacity="0.5"/><rect x="14.64" y="47.92" width="5.49" height="1.1" fill="#9cdcfe" opacity="0.5"/><rect x="20.13" y="47.92" width="0.92" height="1.1" fill="#d4d4d4" opacity="0.5"/><rect x="21.05" y="47.92" width="1.83" height="1.1" fill="#ce9178" opacity="0.5"/><rect x="22.88" y="47.92" width="0.92" height="1.1" fill="#808080" opacity="0.5"/><rect x="3.66" y="49.83" width="0.92" height="1.1" fill="#808080" opacity="0.5"/><rect x="4.58" y="49.83" width="7.32" height="1.1" fill="#569cd6" opacity="0.5"/><rect x="11.89" y="49.83" width="0.92" height="1.1" fill="#808080" opacity="0.5"/><rect x="7.32" y="51.73" width="0.92" height="1.1" fill="#808080" opacity="0.5"/><rect x="8.23" y="51.73" width="5.49" height="1.1" fill="#569cd6" opacity="0.5"/><rect x="13.73" y="51.73" width="0.92" height="1.1" fill="#808080" opacity="0.5"/><rect x="15.55" y="51.73" width="7.32" height="1.1" fill="#d4d4d4" opacity="0.5"/><rect x="23.79" y="51.73" width="10.07" height="1.1" fill="#d4d4d4" opacity="0.5"/><rect x="34.77" y="51.73" width="3.66" height="1.1" fill="#d4d4d4" opacity="0.5"/><rect x="39.34" y="51.73" width="3.66" height="1.1" fill="#d4d4d4" opacity="0.5"/><rect x="43.92" y="51.73" width="1.83" height="1.1" fill="#808080" opacity="0.5"/><rect x="45.75" y="51.73" width="5.49" height="1.1" fill="#569cd6" opacity="0.5"/><rect x="51.24" y="51.73" width="0.92" height="1.1" fill="#808080" opacity="0.5"/><rect x="7.32" y="53.64" width="0.92" height="1.1" fill="#808080" opacity="0.5"/><rect x="8.23" y="53.64" width="0.92" height="1.1" fill="#569cd6" opacity="0.5"/><rect x="9.15" y="53.64" width="0.92" height="1.1" fill="#808080" opacity="0.5"/><rect x="10.07" y="53.64" width="0.92" height="1.1" fill="#808080" opacity="0.5"/><rect x="10.98" y="53.64" width="0.92" height="1.1" fill="#569cd6" opacity="0.5"/><rect x="11.89" y="53.64" width="0.92" height="1.1" fill="#808080" opacity="0.5"/><rect x="12.81" y="53.64" width="3.66" height="1.1" fill="#d4d4d4" opacity="0.5"/><rect x="16.47" y="53.64" width="1.83" height="1.1" fill="#808080" opacity="0.5"/><rect x="18.30" y="53.64" width="0.92" height="1.1" fill="#569cd6" opacity="0.5"/><rect x="19.21" y="53.64" width="0.92" height="1.1" fill="#808080" opacity="0.5"/><rect x="21.05" y="53.64" width="4.58" height="1.1" fill="#d4d4d4" opacity="0.5"/><rect x="26.54" y="53.64" width="3.66" height="1.1" fill="#d4d4d4" opacity="0.5"/><rect x="31.11" y="53.64" width="4.58" height="1.1" fill="#d4d4d4" opacity="0.5"/><rect x="36.60" y="53.64" width="0.92" height="1.1" fill="#808080" opacity="0.5"/><rect x="37.52" y="53.64" width="0.92" height="1.1" fill="#569cd6" opacity="0.5"/><rect x="38.43" y="53.64" width="0.92" height="1.1" fill="#808080" opacity="0.5"/><rect x="39.34" y="53.64" width="3.66" height="1.1" fill="#d4d4d4" opacity="0.5"/><rect x="43.01" y="53.64" width="1.83" height="1.1" fill="#808080" opacity="0.5"/><rect x="44.84" y="53.64" width="0.92" height="1.1" fill="#569cd6" opacity="0.5"/><rect x="45.75" y="53.64" width="0.92" height="1.1" fill="#808080" opacity="0.5"/><rect x="47.58" y="53.64" width="1.83" height="1.1" fill="#808080" opacity="0.5"/><rect x="49.41" y="53.64" width="0.92" height="1.1" fill="#569cd6" opacity="0.5"/><rect x="50.33" y="53.64" width="0.92" height="1.1" fill="#808080" opacity="0.5"/><rect x="7.32" y="55.54" width="0.92" height="1.1" fill="#808080" opacity="0.5"/><rect x="8.23" y="55.54" width="0.92" height="1.1" fill="#569cd6" opacity="0.5"/><rect x="9.15" y="55.54" width="0.92" height="1.1" fill="#808080" opacity="0.5"/><rect x="10.98" y="57.45" width="0.92" height="1.1" fill="#808080" opacity="0.5"/><rect x="11.89" y="57.45" width="4.58" height="1.1" fill="#569cd6" opacity="0.5"/><rect x="17.39" y="57.45" width="2.75" height="1.1" fill="#9cdcfe" opacity="0.5"/><rect x="20.13" y="57.45" width="0.92" height="1.1" fill="#d4d4d4" opacity="0.5"/><rect x="21.05" y="57.45" width="6.41" height="1.1" fill="#ce9178" opacity="0.5"/><rect x="27.45" y="57.45" width="0.92" height="1.1" fill="#808080" opacity="0.5"/><rect x="28.37" y="57.45" width="4.58" height="1.1" fill="#d4d4d4" opacity="0.5"/><rect x="33.86" y="57.45" width="4.58" height="1.1" fill="#d4d4d4" opacity="0.5"/><rect x="39.34" y="57.45" width="1.83" height="1.1" fill="#808080" opacity="0.5"/><rect x="41.18" y="57.45" width="4.58" height="1.1" fill="#569cd6" opacity="0.5"/><rect x="45.75" y="57.45" width="0.92" height="1.1" fill="#808080" opacity="0.5"/><rect x="10.98" y="59.35" width="0.92" height="1.1" fill="#808080" opacity="0.5"/><rect x="11.89" y="59.35" width="4.58" height="1.1" fill="#569cd6" opacity="0.5"/><rect x="17.39" y="59.35" width="3.66" height="1.1" fill="#9cdcfe" opacity="0.5"/><rect x="21.05" y="59.35" width="0.92" height="1.1" fill="#d4d4d4" opacity="0.5"/><rect x="21.96" y="59.35" width="5.49" height="1.1" fill="#ce9178" opacity="0.5"/><rect x="28.37" y="59.35" width="3.66" height="1.1" fill="#9cdcfe" opacity="0.5"/><rect x="32.02" y="59.35" width="0.92" height="1.1" fill="#d4d4d4" opacity="0.5"/><rect x="32.94" y="59.35" width="6.41" height="1.1" fill="#ce9178" opacity="0.5"/><rect x="40.26" y="59.35" width="1.83" height="1.1" fill="#9cdcfe" opacity="0.5"/><rect x="42.09" y="59.35" width="0.92" height="1.1" fill="#d4d4d4" opacity="0.5"/><rect x="43.01" y="59.35" width="6.41" height="1.1" fill="#ce9178" opacity="0.5"/><rect x="49.41" y="59.35" width="0.92" height="1.1" fill="#808080" opacity="0.5"/><rect x="10.98" y="63.16" width="0.92" height="1.1" fill="#808080" opacity="0.5"/><rect x="11.89" y="63.16" width="4.58" height="1.1" fill="#569cd6" opacity="0.5"/><rect x="17.39" y="63.16" width="2.75" height="1.1" fill="#9cdcfe" opacity="0.5"/><rect x="20.13" y="63.16" width="0.92" height="1.1" fill="#d4d4d4" opacity="0.5"/><rect x="21.05" y="63.16" width="6.41" height="1.1" fill="#ce9178" opacity="0.5"/><rect x="27.45" y="63.16" width="0.92" height="1.1" fill="#808080" opacity="0.5"/><rect x="28.37" y="63.16" width="5.49" height="1.1" fill="#d4d4d4" opacity="0.5"/><rect x="34.77" y="63.16" width="1.83" height="1.1" fill="#808080" opacity="0.5"/><rect x="36.60" y="63.16" width="4.58" height="1.1" fill="#569cd6" opacity="0.5"/><rect x="41.18" y="63.16" width="0.92" height="1.1" fill="#808080" opacity="0.5"/><rect x="10.98" y="66.97" width="0.92" height="1.1" fill="#808080" opacity="0.5"/><rect x="11.89" y="66.97" width="4.58" height="1.1" fill="#569cd6" opacity="0.5"/><rect x="17.39" y="66.97" width="3.66" height="1.1" fill="#9cdcfe" opacity="0.5"/><rect x="21.05" y="66.97" width="0.92" height="1.1" fill="#d4d4d4" opacity="0.5"/><rect x="21.96" y="66.97" width="6.41" height="1.1" fill="#ce9178" opacity="0.5"/><rect x="29.28" y="66.97" width="3.66" height="1.1" fill="#9cdcfe" opacity="0.5"/><rect x="32.94" y="66.97" width="0.92" height="1.1" fill="#d4d4d4" opacity="0.5"/><rect x="33.86" y="66.97" width="6.41" height="1.1" fill="#ce9178" opacity="0.5"/><rect x="41.18" y="66.97" width="1.83" height="1.1" fill="#9cdcfe" opacity="0.5"/><rect x="43.01" y="66.97" width="0.92" height="1.1" fill="#d4d4d4" opacity="0.5"/><rect x="43.92" y="66.97" width="6.41" height="1.1" fill="#ce9178" opacity="0.5"/><rect x="51.24" y="66.97" width="0.92" height="1.1" fill="#808080" opacity="0.5"/><rect x="10.98" y="70.78" width="0.92" height="1.1" fill="#808080" opacity="0.5"/><rect x="11.89" y="70.78" width="4.58" height="1.1" fill="#569cd6" opacity="0.5"/><rect x="17.39" y="70.78" width="2.75" height="1.1" fill="#9cdcfe" opacity="0.5"/><rect x="20.13" y="70.78" width="0.92" height="1.1" fill="#d4d4d4" opacity="0.5"/><rect x="21.05" y="70.78" width="5.49" height="1.1" fill="#ce9178" opacity="0.5"/><rect x="26.54" y="70.78" width="0.92" height="1.1" fill="#808080" opacity="0.5"/><rect x="27.45" y="70.78" width="8.23" height="1.1" fill="#d4d4d4" opacity="0.5"/><rect x="36.60" y="70.78" width="1.83" height="1.1" fill="#808080" opacity="0.5"/><rect x="38.43" y="70.78" width="4.58" height="1.1" fill="#569cd6" opacity="0.5"/><rect x="43.01" y="70.78" width="0.92" height="1.1" fill="#808080" opacity="0.5"/><rect x="10.98" y="72.69" width="0.92" height="1.1" fill="#808080" opacity="0.5"/><rect x="11.89" y="72.69" width="4.58" height="1.1" fill="#569cd6" opacity="0.5"/><rect x="17.39" y="72.69" width="3.66" height="1.1" fill="#9cdcfe" opacity="0.5"/><rect x="21.05" y="72.69" width="0.92" height="1.1" fill="#d4d4d4" opacity="0.5"/><rect x="21.96" y="72.69" width="9.15" height="1.1" fill="#ce9178" opacity="0.5"/><rect x="32.02" y="72.69" width="3.66" height="1.1" fill="#9cdcfe" opacity="0.5"/><rect x="35.69" y="72.69" width="0.92" height="1.1" fill="#d4d4d4" opacity="0.5"/><rect x="36.60" y="72.69" width="5.49" height="1.1" fill="#ce9178" opacity="0.5"/><rect x="43.01" y="72.69" width="1.83" height="1.1" fill="#9cdcfe" opacity="0.5"/><rect x="44.84" y="72.69" width="0.92" height="1.1" fill="#d4d4d4" opacity="0.5"/><rect x="45.75" y="72.69" width="5.49" height="1.1" fill="#ce9178" opacity="0.5"/><rect x="51.24" y="72.69" width="0.92" height="1.1" fill="#808080" opacity="0.5"/><rect x="10.98" y="76.50" width="0.92" height="1.1" fill="#808080" opacity="0.5"/><rect x="11.89" y="76.50" width="4.58" height="1.1" fill="#569cd6" opacity="0.5"/><rect x="17.39" y="76.50" width="2.75" height="1.1" fill="#9cdcfe" opacity="0.5"/><rect x="20.13" y="76.50" width="0.92" height="1.1" fill="#d4d4d4" opacity="0.5"/><rect x="21.05" y="76.50" width="7.32" height="1.1" fill="#ce9178" opacity="0.5"/><rect x="28.37" y="76.50" width="0.92" height="1.1" fill="#808080" opacity="0.5"/><rect x="29.28" y="76.50" width="6.41" height="1.1" fill="#d4d4d4" opacity="0.5"/><rect x="36.60" y="76.50" width="1.83" height="1.1" fill="#808080" opacity="0.5"/><rect x="38.43" y="76.50" width="4.58" height="1.1" fill="#569cd6" opacity="0.5"/><rect x="43.01" y="76.50" width="0.92" height="1.1" fill="#808080" opacity="0.5"/><rect x="10.98" y="78.41" width="0.92" height="1.1" fill="#808080" opacity="0.5"/><rect x="11.89" y="78.41" width="4.58" height="1.1" fill="#569cd6" opacity="0.5"/><rect x="17.39" y="78.41" width="3.66" height="1.1" fill="#9cdcfe" opacity="0.5"/><rect x="21.05" y="78.41" width="0.92" height="1.1" fill="#d4d4d4" opacity="0.5"/><rect x="21.96" y="78.41" width="7.32" height="1.1" fill="#ce9178" opacity="0.5"/><rect x="30.20" y="78.41" width="3.66" height="1.1" fill="#9cdcfe" opacity="0.5"/><rect x="33.86" y="78.41" width="0.92" height="1.1" fill="#d4d4d4" opacity="0.5"/><rect x="34.77" y="78.41" width="4.58" height="1.1" fill="#ce9178" opacity="0.5"/><rect x="40.26" y="78.41" width="1.83" height="1.1" fill="#9cdcfe" opacity="0.5"/><rect x="42.09" y="78.41" width="0.92" height="1.1" fill="#d4d4d4" opacity="0.5"/><rect x="43.01" y="78.41" width="7.32" height="1.1" fill="#ce9178" opacity="0.5"/><rect x="50.33" y="78.41" width="0.92" height="1.1" fill="#808080" opacity="0.5"/><rect x="10.98" y="82.22" width="0.92" height="1.1" fill="#808080" opacity="0.5"/><rect x="11.89" y="82.22" width="4.58" height="1.1" fill="#569cd6" opacity="0.5"/><rect x="17.39" y="82.22" width="2.75" height="1.1" fill="#9cdcfe" opacity="0.5"/><rect x="20.13" y="82.22" width="0.92" height="1.1" fill="#d4d4d4" opacity="0.5"/><rect x="21.05" y="82.22" width="5.49" height="1.1" fill="#ce9178" opacity="0.5"/><rect x="26.54" y="82.22" width="0.92" height="1.1" fill="#808080" opacity="0.5"/><rect x="27.45" y="82.22" width="5.49" height="1.1" fill="#d4d4d4" opacity="0.5"/><rect x="33.86" y="82.22" width="1.83" height="1.1" fill="#808080" opacity="0.5"/><rect x="35.69" y="82.22" width="4.58" height="1.1" fill="#569cd6" opacity="0.5"/><rect x="40.26" y="82.22" width="0.92" height="1.1" fill="#808080" opacity="0.5"/><rect x="10.98" y="84.12" width="0.92" height="1.1" fill="#808080" opacity="0.5"/><rect x="11.89" y="84.12" width="4.58" height="1.1" fill="#569cd6" opacity="0.5"/><rect x="17.39" y="84.12" width="3.66" height="1.1" fill="#9cdcfe" opacity="0.5"/><rect x="21.05" y="84.12" width="0.92" height="1.1" fill="#d4d4d4" opacity="0.5"/><rect x="21.96" y="84.12" width="4.58" height="1.1" fill="#ce9178" opacity="0.5"/><rect x="27.45" y="84.12" width="3.66" height="1.1" fill="#9cdcfe" opacity="0.5"/><rect x="31.11" y="84.12" width="0.92" height="1.1" fill="#d4d4d4" opacity="0.5"/><rect x="32.02" y="84.12" width="5.49" height="1.1" fill="#ce9178" opacity="0.5"/><rect x="38.43" y="84.12" width="1.83" height="1.1" fill="#9cdcfe" opacity="0.5"/><rect x="40.26" y="84.12" width="0.92" height="1.1" fill="#d4d4d4" opacity="0.5"/><rect x="41.18" y="84.12" width="5.49" height="1.1" fill="#ce9178" opacity="0.5"/><rect x="46.66" y="84.12" width="0.92" height="1.1" fill="#808080" opacity="0.5"/><rect x="10.98" y="87.93" width="0.92" height="1.1" fill="#808080" opacity="0.5"/><rect x="11.89" y="87.93" width="4.58" height="1.1" fill="#569cd6" opacity="0.5"/><rect x="17.39" y="87.93" width="2.75" height="1.1" fill="#9cdcfe" opacity="0.5"/><rect x="20.13" y="87.93" width="0.92" height="1.1" fill="#d4d4d4" opacity="0.5"/><rect x="21.05" y="87.93" width="7.32" height="1.1" fill="#ce9178" opacity="0.5"/><rect x="28.37" y="87.93" width="0.92" height="1.1" fill="#808080" opacity="0.5"/><rect x="29.28" y="87.93" width="6.41" height="1.1" fill="#d4d4d4" opacity="0.5"/><rect x="36.60" y="87.93" width="1.83" height="1.1" fill="#808080" opacity="0.5"/><rect x="38.43" y="87.93" width="4.58" height="1.1" fill="#569cd6" opacity="0.5"/><rect x="43.01" y="87.93" width="0.92" height="1.1" fill="#808080" opacity="0.5"/><rect x="10.98" y="89.83" width="0.92" height="1.1" fill="#808080" opacity="0.5"/><rect x="11.89" y="89.83" width="4.58" height="1.1" fill="#569cd6" opacity="0.5"/><rect x="17.39" y="89.83" width="3.66" height="1.1" fill="#9cdcfe" opacity="0.5"/><rect x="21.05" y="89.83" width="0.92" height="1.1" fill="#d4d4d4" opacity="0.5"/><rect x="21.96" y="89.83" width="7.32" height="1.1" fill="#ce9178" opacity="0.5"/><rect x="30.20" y="89.83" width="3.66" height="1.1" fill="#9cdcfe" opacity="0.5"/><rect x="33.86" y="89.83" width="0.92" height="1.1" fill="#d4d4d4" opacity="0.5"/><rect x="34.77" y="89.83" width="7.32" height="1.1" fill="#ce9178" opacity="0.5"/><rect x="43.01" y="89.83" width="1.83" height="1.1" fill="#9cdcfe" opacity="0.5"/><rect x="44.84" y="89.83" width="0.92" height="1.1" fill="#d4d4d4" opacity="0.5"/><rect x="45.75" y="89.83" width="7.32" height="1.1" fill="#ce9178" opacity="0.5"/><rect x="53.07" y="89.83" width="0.92" height="1.1" fill="#808080" opacity="0.5"/><rect x="10.98" y="95.55" width="0.92" height="1.1" fill="#808080" opacity="0.5"/><rect x="11.89" y="95.55" width="4.58" height="1.1" fill="#569cd6" opacity="0.5"/><rect x="17.39" y="95.55" width="2.75" height="1.1" fill="#9cdcfe" opacity="0.5"/><rect x="20.13" y="95.55" width="0.92" height="1.1" fill="#d4d4d4" opacity="0.5"/><rect x="21.05" y="95.55" width="4.58" height="1.1" fill="#ce9178" opacity="0.5"/><rect x="25.62" y="95.55" width="0.92" height="1.1" fill="#808080" opacity="0.5"/><rect x="26.54" y="95.55" width="3.66" height="1.1" fill="#d4d4d4" opacity="0.5"/><rect x="31.11" y="95.55" width="1.83" height="1.1" fill="#808080" opacity="0.5"/><rect x="32.94" y="95.55" width="4.58" height="1.1" fill="#569cd6" opacity="0.5"/><rect x="37.52" y="95.55" width="0.92" height="1.1" fill="#808080" opacity="0.5"/><rect x="10.98" y="97.45" width="0.92" height="1.1" fill="#808080" opacity="0.5"/><rect x="11.89" y="97.45" width="4.58" height="1.1" fill="#569cd6" opacity="0.5"/><rect x="17.39" y="97.45" width="3.66" height="1.1" fill="#9cdcfe" opacity="0.5"/><rect x="21.05" y="97.45" width="0.92" height="1.1" fill="#d4d4d4" opacity="0.5"/><rect x="21.96" y="97.45" width="4.58" height="1.1" fill="#ce9178" opacity="0.5"/><rect x="27.45" y="97.45" width="3.66" height="1.1" fill="#9cdcfe" opacity="0.5"/><rect x="31.11" y="97.45" width="0.92" height="1.1" fill="#d4d4d4" opacity="0.5"/><rect x="32.02" y="97.45" width="4.58" height="1.1" fill="#ce9178" opacity="0.5"/><rect x="37.52" y="97.45" width="1.83" height="1.1" fill="#9cdcfe" opacity="0.5"/><rect x="39.34" y="97.45" width="0.92" height="1.1" fill="#d4d4d4" opacity="0.5"/><rect x="40.26" y="97.45" width="4.58" height="1.1" fill="#ce9178" opacity="0.5"/><rect x="44.84" y="97.45" width="0.92" height="1.1" fill="#808080" opacity="0.5"/><rect x="10.98" y="101.27" width="0.92" height="1.1" fill="#808080" opacity="0.5"/><rect x="11.89" y="101.27" width="4.58" height="1.1" fill="#569cd6" opacity="0.5"/><rect x="17.39" y="101.27" width="2.75" height="1.1" fill="#9cdcfe" opacity="0.5"/><rect x="20.13" y="101.27" width="0.92" height="1.1" fill="#d4d4d4" opacity="0.5"/><rect x="21.05" y="101.27" width="6.41" height="1.1" fill="#ce9178" opacity="0.5"/><rect x="27.45" y="101.27" width="0.92" height="1.1" fill="#808080" opacity="0.5"/><rect x="28.37" y="101.27" width="5.49" height="1.1" fill="#d4d4d4" opacity="0.5"/><rect x="34.77" y="101.27" width="1.83" height="1.1" fill="#808080" opacity="0.5"/><rect x="36.60" y="101.27" width="4.58" height="1.1" fill="#569cd6" opacity="0.5"/><rect x="41.18" y="101.27" width="0.92" height="1.1" fill="#808080" opacity="0.5"/><rect x="10.98" y="103.17" width="0.92" height="1.1" fill="#808080" opacity="0.5"/><rect x="11.89" y="103.17" width="4.58" height="1.1" fill="#569cd6" opacity="0.5"/><rect x="17.39" y="103.17" width="3.66" height="1.1" fill="#9cdcfe" opacity="0.5"/><rect x="21.05" y="103.17" width="0.92" height="1.1" fill="#d4d4d4" opacity="0.5"/><rect x="21.96" y="103.17" width="6.41" height="1.1" fill="#ce9178" opacity="0.5"/><rect x="29.28" y="103.17" width="3.66" height="1.1" fill="#9cdcfe" opacity="0.5"/><rect x="32.94" y="103.17" width="0.92" height="1.1" fill="#d4d4d4" opacity="0.5"/><rect x="33.86" y="103.17" width="6.41" height="1.1" fill="#ce9178" opacity="0.5"/><rect x="41.18" y="103.17" width="1.83" height="1.1" fill="#9cdcfe" opacity="0.5"/><rect x="43.01" y="103.17" width="0.92" height="1.1" fill="#d4d4d4" opacity="0.5"/><rect x="43.92" y="103.17" width="6.41" height="1.1" fill="#ce9178" opacity="0.5"/><rect x="50.33" y="103.17" width="0.92" height="1.1" fill="#808080" opacity="0.5"/><rect x="10.98" y="106.98" width="0.92" height="1.1" fill="#808080" opacity="0.5"/><rect x="11.89" y="106.98" width="4.58" height="1.1" fill="#569cd6" opacity="0.5"/><rect x="17.39" y="106.98" width="2.75" height="1.1" fill="#9cdcfe" opacity="0.5"/><rect x="20.13" y="106.98" width="0.92" height="1.1" fill="#d4d4d4" opacity="0.5"/><rect x="21.05" y="106.98" width="5.49" height="1.1" fill="#ce9178" opacity="0.5"/><rect x="26.54" y="106.98" width="0.92" height="1.1" fill="#808080" opacity="0.5"/><rect x="27.45" y="106.98" width="4.58" height="1.1" fill="#d4d4d4" opacity="0.5"/><rect x="32.94" y="106.98" width="1.83" height="1.1" fill="#808080" opacity="0.5"/><rect x="34.77" y="106.98" width="4.58" height="1.1" fill="#569cd6" opacity="0.5"/><rect x="39.34" y="106.98" width="0.92" height="1.1" fill="#808080" opacity="0.5"/><rect x="10.98" y="108.89" width="0.92" height="1.1" fill="#808080" opacity="0.5"/><rect x="11.89" y="108.89" width="4.58" height="1.1" fill="#569cd6" opacity="0.5"/><rect x="17.39" y="108.89" width="3.66" height="1.1" fill="#9cdcfe" opacity="0.5"/><rect x="21.05" y="108.89" width="0.92" height="1.1" fill="#d4d4d4" opacity="0.5"/><rect x="21.96" y="108.89" width="5.49" height="1.1" fill="#ce9178" opacity="0.5"/><rect x="28.37" y="108.89" width="3.66" height="1.1" fill="#9cdcfe" opacity="0.5"/><rect x="32.02" y="108.89" width="0.92" height="1.1" fill="#d4d4d4" opacity="0.5"/><rect x="32.94" y="108.89" width="5.49" height="1.1" fill="#ce9178" opacity="0.5"/><rect x="39.34" y="108.89" width="1.83" height="1.1" fill="#9cdcfe" opacity="0.5"/><rect x="41.18" y="108.89" width="0.92" height="1.1" fill="#d4d4d4" opacity="0.5"/><rect x="42.09" y="108.89" width="5.49" height="1.1" fill="#ce9178" opacity="0.5"/><rect x="47.58" y="108.89" width="0.92" height="1.1" fill="#808080" opacity="0.5"/><rect x="10.98" y="112.69" width="0.92" height="1.1" fill="#808080" opacity="0.5"/><rect x="11.89" y="112.69" width="4.58" height="1.1" fill="#569cd6" opacity="0.5"/><rect x="17.39" y="112.69" width="2.75" height="1.1" fill="#9cdcfe" opacity="0.5"/><rect x="20.13" y="112.69" width="0.92" height="1.1" fill="#d4d4d4" opacity="0.5"/><rect x="21.05" y="112.69" width="6.41" height="1.1" fill="#ce9178" opacity="0.5"/><rect x="27.45" y="112.69" width="0.92" height="1.1" fill="#808080" opacity="0.5"/><rect x="28.37" y="112.69" width="5.49" height="1.1" fill="#d4d4d4" opacity="0.5"/><rect x="34.77" y="112.69" width="1.83" height="1.1" fill="#808080" opacity="0.5"/><rect x="36.60" y="112.69" width="4.58" height="1.1" fill="#569cd6" opacity="0.5"/><rect x="41.18" y="112.69" width="0.92" height="1.1" fill="#808080" opacity="0.5"/><rect x="10.98" y="114.60" width="0.92" height="1.1" fill="#808080" opacity="0.5"/><rect x="11.89" y="114.60" width="4.58" height="1.1" fill="#569cd6" opacity="0.5"/><rect x="17.39" y="114.60" width="3.66" height="1.1" fill="#9cdcfe" opacity="0.5"/><rect x="21.05" y="114.60" width="0.92" height="1.1" fill="#d4d4d4" opacity="0.5"/><rect x="21.96" y="114.60" width="6.41" height="1.1" fill="#ce9178" opacity="0.5"/><rect x="29.28" y="114.60" width="3.66" height="1.1" fill="#9cdcfe" opacity="0.5"/><rect x="32.94" y="114.60" width="0.92" height="1.1" fill="#d4d4d4" opacity="0.5"/><rect x="33.86" y="114.60" width="6.41" height="1.1" fill="#ce9178" opacity="0.5"/><rect x="41.18" y="114.60" width="1.83" height="1.1" fill="#9cdcfe" opacity="0.5"/><rect x="43.01" y="114.60" width="0.92" height="1.1" fill="#d4d4d4" opacity="0.5"/><rect x="43.92" y="114.60" width="6.41" height="1.1" fill="#ce9178" opacity="0.5"/><rect x="50.33" y="114.60" width="0.92" height="1.1" fill="#808080" opacity="0.5"/><rect x="10.98" y="118.41" width="0.92" height="1.1" fill="#808080" opacity="0.5"/><rect x="11.89" y="118.41" width="4.58" height="1.1" fill="#569cd6" opacity="0.5"/><rect x="17.39" y="118.41" width="2.75" height="1.1" fill="#9cdcfe" opacity="0.5"/><rect x="20.13" y="118.41" width="0.92" height="1.1" fill="#d4d4d4" opacity="0.5"/><rect x="21.05" y="118.41" width="5.49" height="1.1" fill="#ce9178" opacity="0.5"/><rect x="26.54" y="118.41" width="0.92" height="1.1" fill="#808080" opacity="0.5"/><rect x="27.45" y="118.41" width="4.58" height="1.1" fill="#d4d4d4" opacity="0.5"/><rect x="32.94" y="118.41" width="1.83" height="1.1" fill="#808080" opacity="0.5"/><rect x="34.77" y="118.41" width="4.58" height="1.1" fill="#569cd6" opacity="0.5"/><rect x="39.34" y="118.41" width="0.92" height="1.1" fill="#808080" opacity="0.5"/><rect x="10.98" y="120.31" width="0.92" height="1.1" fill="#808080" opacity="0.5"/><rect x="11.89" y="120.31" width="4.58" height="1.1" fill="#569cd6" opacity="0.5"/><rect x="17.39" y="120.31" width="3.66" height="1.1" fill="#9cdcfe" opacity="0.5"/><rect x="21.05" y="120.31" width="0.92" height="1.1" fill="#d4d4d4" opacity="0.5"/><rect x="21.96" y="120.31" width="5.49" height="1.1" fill="#ce9178" opacity="0.5"/><rect x="28.37" y="120.31" width="3.66" height="1.1" fill="#9cdcfe" opacity="0.5"/><rect x="32.02" y="120.31" width="0.92" height="1.1" fill="#d4d4d4" opacity="0.5"/><rect x="32.94" y="120.31" width="5.49" height="1.1" fill="#ce9178" opacity="0.5"/><rect x="39.34" y="120.31" width="1.83" height="1.1" fill="#9cdcfe" opacity="0.5"/><rect x="41.18" y="120.31" width="0.92" height="1.1" fill="#d4d4d4" opacity="0.5"/><rect x="42.09" y="120.31" width="5.49" height="1.1" fill="#ce9178" opacity="0.5"/><rect x="47.58" y="120.31" width="0.92" height="1.1" fill="#808080" opacity="0.5"/><rect x="10.98" y="124.12" width="0.92" height="1.1" fill="#808080" opacity="0.5"/><rect x="11.89" y="124.12" width="4.58" height="1.1" fill="#569cd6" opacity="0.5"/><rect x="17.39" y="124.12" width="2.75" height="1.1" fill="#9cdcfe" opacity="0.5"/><rect x="20.13" y="124.12" width="0.92" height="1.1" fill="#d4d4d4" opacity="0.5"/><rect x="21.05" y="124.12" width="6.41" height="1.1" fill="#ce9178" opacity="0.5"/><rect x="27.45" y="124.12" width="0.92" height="1.1" fill="#808080" opacity="0.5"/><rect x="28.37" y="124.12" width="5.49" height="1.1" fill="#d4d4d4" opacity="0.5"/><rect x="34.77" y="124.12" width="1.83" height="1.1" fill="#808080" opacity="0.5"/><rect x="36.60" y="124.12" width="4.58" height="1.1" fill="#569cd6" opacity="0.5"/><rect x="41.18" y="124.12" width="0.92" height="1.1" fill="#808080" opacity="0.5"/><rect x="10.98" y="126.03" width="0.92" height="1.1" fill="#808080" opacity="0.5"/><rect x="11.89" y="126.03" width="4.58" height="1.1" fill="#569cd6" opacity="0.5"/><rect x="17.39" y="126.03" width="3.66" height="1.1" fill="#9cdcfe" opacity="0.5"/><rect x="21.05" y="126.03" width="0.92" height="1.1" fill="#d4d4d4" opacity="0.5"/><rect x="21.96" y="126.03" width="6.41" height="1.1" fill="#ce9178" opacity="0.5"/><rect x="29.28" y="126.03" width="3.66" height="1.1" fill="#9cdcfe" opacity="0.5"/><rect x="32.94" y="126.03" width="0.92" height="1.1" fill="#d4d4d4" opacity="0.5"/><rect x="33.86" y="126.03" width="6.41" height="1.1" fill="#ce9178" opacity="0.5"/><rect x="41.18" y="126.03" width="1.83" height="1.1" fill="#9cdcfe" opacity="0.5"/><rect x="43.01" y="126.03" width="0.92" height="1.1" fill="#d4d4d4" opacity="0.5"/><rect x="43.92" y="126.03" width="6.41" height="1.1" fill="#ce9178" opacity="0.5"/><rect x="50.33" y="126.03" width="0.92" height="1.1" fill="#808080" opacity="0.5"/><rect x="10.98" y="129.84" width="0.92" height="1.1" fill="#808080" opacity="0.5"/><rect x="11.89" y="129.84" width="4.58" height="1.1" fill="#569cd6" opacity="0.5"/><rect x="17.39" y="129.84" width="2.75" height="1.1" fill="#9cdcfe" opacity="0.5"/><rect x="20.13" y="129.84" width="0.92" height="1.1" fill="#d4d4d4" opacity="0.5"/><rect x="21.05" y="129.84" width="5.49" height="1.1" fill="#ce9178" opacity="0.5"/><rect x="26.54" y="129.84" width="0.92" height="1.1" fill="#808080" opacity="0.5"/><rect x="27.45" y="129.84" width="4.58" height="1.1" fill="#d4d4d4" opacity="0.5"/><rect x="32.94" y="129.84" width="1.83" height="1.1" fill="#808080" opacity="0.5"/><rect x="34.77" y="129.84" width="4.58" height="1.1" fill="#569cd6" opacity="0.5"/><rect x="39.34" y="129.84" width="0.92" height="1.1" fill="#808080" opacity="0.5"/><rect x="10.98" y="131.75" width="0.92" height="1.1" fill="#808080" opacity="0.5"/><rect x="11.89" y="131.75" width="4.58" height="1.1" fill="#569cd6" opacity="0.5"/><rect x="17.39" y="131.75" width="3.66" height="1.1" fill="#9cdcfe" opacity="0.5"/><rect x="21.05" y="131.75" width="0.92" height="1.1" fill="#d4d4d4" opacity="0.5"/><rect x="21.96" y="131.75" width="5.49" height="1.1" fill="#ce9178" opacity="0.5"/><rect x="28.37" y="131.75" width="3.66" height="1.1" fill="#9cdcfe" opacity="0.5"/><rect x="32.02" y="131.75" width="0.92" height="1.1" fill="#d4d4d4" opacity="0.5"/><rect x="32.94" y="131.75" width="5.49" height="1.1" fill="#ce9178" opacity="0.5"/><rect x="39.34" y="131.75" width="1.83" height="1.1" fill="#9cdcfe" opacity="0.5"/><rect x="41.18" y="131.75" width="0.92" height="1.1" fill="#d4d4d4" opacity="0.5"/><rect x="42.09" y="131.75" width="5.49" height="1.1" fill="#ce9178" opacity="0.5"/><rect x="47.58" y="131.75" width="0.92" height="1.1" fill="#808080" opacity="0.5"/><rect x="10.98" y="135.56" width="0.92" height="1.1" fill="#808080" opacity="0.5"/><rect x="11.89" y="135.56" width="4.58" height="1.1" fill="#569cd6" opacity="0.5"/><rect x="17.39" y="135.56" width="2.75" height="1.1" fill="#9cdcfe" opacity="0.5"/><rect x="20.13" y="135.56" width="0.92" height="1.1" fill="#d4d4d4" opacity="0.5"/><rect x="21.05" y="135.56" width="9.15" height="1.1" fill="#ce9178" opacity="0.5"/><rect x="30.20" y="135.56" width="0.92" height="1.1" fill="#808080" opacity="0.5"/><rect x="31.11" y="135.56" width="7.32" height="1.1" fill="#d4d4d4" opacity="0.5"/><rect x="39.34" y="135.56" width="5.49" height="1.1" fill="#d4d4d4" opacity="0.5"/><rect x="45.75" y="135.56" width="1.83" height="1.1" fill="#808080" opacity="0.5"/><rect x="47.58" y="135.56" width="4.58" height="1.1" fill="#569cd6" opacity="0.5"/><rect x="52.16" y="135.56" width="0.92" height="1.1" fill="#808080" opacity="0.5"/><rect x="10.98" y="137.46" width="0.92" height="1.1" fill="#808080" opacity="0.5"/><rect x="11.89" y="137.46" width="4.58" height="1.1" fill="#569cd6" opacity="0.5"/><rect x="17.39" y="137.46" width="3.66" height="1.1" fill="#9cdcfe" opacity="0.5"/><rect x="21.05" y="137.46" width="0.92" height="1.1" fill="#d4d4d4" opacity="0.5"/><rect x="21.96" y="137.46" width="14.64" height="1.1" fill="#ce9178" opacity="0.5"/><rect x="37.52" y="137.46" width="3.66" height="1.1" fill="#9cdcfe" opacity="0.5"/><rect x="41.18" y="137.46" width="0.92" height="1.1" fill="#d4d4d4" opacity="0.5"/><rect x="42.09" y="137.46" width="9.15" height="1.1" fill="#ce9178" opacity="0.5"/><rect x="52.16" y="137.46" width="1.83" height="1.1" fill="#9cdcfe" opacity="0.5"/><rect x="53.98" y="137.46" width="0.92" height="1.1" fill="#d4d4d4" opacity="0.5"/><rect x="54.90" y="137.46" width="9.15" height="1.1" fill="#ce9178" opacity="0.5"/><rect x="64.05" y="137.46" width="0.92" height="1.1" fill="#808080" opacity="0.5"/><rect x="7.32" y="139.37" width="1.83" height="1.1" fill="#808080" opacity="0.5"/><rect x="9.15" y="139.37" width="0.92" height="1.1" fill="#569cd6" opacity="0.5"/><rect x="10.07" y="139.37" width="0.92" height="1.1" fill="#808080" opacity="0.5"/><rect x="7.32" y="141.27" width="0.92" height="1.1" fill="#808080" opacity="0.5"/><rect x="8.23" y="141.27" width="0.92" height="1.1" fill="#569cd6" opacity="0.5"/><rect x="9.15" y="141.27" width="0.92" height="1.1" fill="#808080" opacity="0.5"/><rect x="7.32" y="143.18" width="0.92" height="1.1" fill="#808080" opacity="0.5"/><rect x="8.23" y="143.18" width="4.58" height="1.1" fill="#569cd6" opacity="0.5"/><rect x="13.73" y="143.18" width="2.75" height="1.1" fill="#9cdcfe" opacity="0.5"/><rect x="16.47" y="143.18" width="0.92" height="1.1" fill="#d4d4d4" opacity="0.5"/><rect x="17.39" y="143.18" width="5.49" height="1.1" fill="#ce9178" opacity="0.5"/><rect x="22.88" y="143.18" width="0.92" height="1.1" fill="#808080" opacity="0.5"/><rect x="23.79" y="143.18" width="5.49" height="1.1" fill="#d4d4d4" opacity="0.5"/><rect x="30.20" y="143.18" width="4.58" height="1.1" fill="#d4d4d4" opacity="0.5"/><rect x="35.69" y="143.18" width="1.83" height="1.1" fill="#808080" opacity="0.5"/><rect x="37.52" y="143.18" width="4.58" height="1.1" fill="#569cd6" opacity="0.5"/><rect x="42.09" y="143.18" width="0.92" height="1.1" fill="#808080" opacity="0.5"/><rect x="7.32" y="145.08" width="0.92" height="1.1" fill="#808080" opacity="0.5"/><rect x="8.23" y="145.08" width="5.49" height="1.1" fill="#569cd6" opacity="0.5"/><rect x="14.64" y="145.08" width="3.66" height="1.1" fill="#9cdcfe" opacity="0.5"/><rect x="18.30" y="145.08" width="0.92" height="1.1" fill="#d4d4d4" opacity="0.5"/><rect x="19.21" y="145.08" width="5.49" height="1.1" fill="#ce9178" opacity="0.5"/><rect x="25.62" y="145.08" width="1.83" height="1.1" fill="#9cdcfe" opacity="0.5"/><rect x="27.45" y="145.08" width="0.92" height="1.1" fill="#d4d4d4" opacity="0.5"/><rect x="28.37" y="145.08" width="5.49" height="1.1" fill="#ce9178" opacity="0.5"/><rect x="33.86" y="145.08" width="0.92" height="1.1" fill="#808080" opacity="0.5"/><rect x="10.98" y="146.99" width="0.92" height="1.1" fill="#808080" opacity="0.5"/><rect x="11.89" y="146.99" width="7.32" height="1.1" fill="#569cd6" opacity="0.5"/><rect x="20.13" y="146.99" width="4.58" height="1.1" fill="#9cdcfe" opacity="0.5"/><rect x="24.71" y="146.99" width="0.92" height="1.1" fill="#d4d4d4" opacity="0.5"/><rect x="25.62" y="146.99" width="8.23" height="1.1" fill="#ce9178" opacity="0.5"/><rect x="33.86" y="146.99" width="0.92" height="1.1" fill="#808080" opacity="0.5"/><rect x="10.98" y="148.89" width="0.92" height="1.1" fill="#808080" opacity="0.5"/><rect x="11.89" y="148.89" width="5.49" height="1.1" fill="#569cd6" opacity="0.5"/><rect x="18.30" y="148.89" width="4.58" height="1.1" fill="#9cdcfe" opacity="0.5"/><rect x="22.88" y="148.89" width="0.92" height="1.1" fill="#d4d4d4" opacity="0.5"/><rect x="23.79" y="148.89" width="4.58" height="1.1" fill="#ce9178" opacity="0.5"/><rect x="28.37" y="148.89" width="0.92" height="1.1" fill="#808080" opacity="0.5"/><rect x="29.28" y="148.89" width="6.41" height="1.1" fill="#d4d4d4" opacity="0.5"/><rect x="35.69" y="148.89" width="1.83" height="1.1" fill="#808080" opacity="0.5"/><rect x="37.52" y="148.89" width="5.49" height="1.1" fill="#569cd6" opacity="0.5"/><rect x="43.01" y="148.89" width="0.92" height="1.1" fill="#808080" opacity="0.5"/><rect x="10.98" y="150.80" width="0.92" height="1.1" fill="#808080" opacity="0.5"/><rect x="11.89" y="150.80" width="5.49" height="1.1" fill="#569cd6" opacity="0.5"/><rect x="18.30" y="150.80" width="4.58" height="1.1" fill="#9cdcfe" opacity="0.5"/><rect x="22.88" y="150.80" width="0.92" height="1.1" fill="#d4d4d4" opacity="0.5"/><rect x="23.79" y="150.80" width="4.58" height="1.1" fill="#ce9178" opacity="0.5"/><rect x="28.37" y="150.80" width="0.92" height="1.1" fill="#808080" opacity="0.5"/><rect x="29.28" y="150.80" width="6.41" height="1.1" fill="#d4d4d4" opacity="0.5"/><rect x="35.69" y="150.80" width="1.83" height="1.1" fill="#808080" opacity="0.5"/><rect x="37.52" y="150.80" width="5.49" height="1.1" fill="#569cd6" opacity="0.5"/><rect x="43.01" y="150.80" width="0.92" height="1.1" fill="#808080" opacity="0.5"/><rect x="10.98" y="152.70" width="0.92" height="1.1" fill="#808080" opacity="0.5"/><rect x="11.89" y="152.70" width="5.49" height="1.1" fill="#569cd6" opacity="0.5"/><rect x="18.30" y="152.70" width="4.58" height="1.1" fill="#9cdcfe" opacity="0.5"/><rect x="22.88" y="152.70" width="0.92" height="1.1" fill="#d4d4d4" opacity="0.5"/><rect x="23.79" y="152.70" width="4.58" height="1.1" fill="#ce9178" opacity="0.5"/><rect x="28.37" y="152.70" width="0.92" height="1.1" fill="#808080" opacity="0.5"/><rect x="29.28" y="152.70" width="7.32" height="1.1" fill="#d4d4d4" opacity="0.5"/><rect x="36.60" y="152.70" width="1.83" height="1.1" fill="#808080" opacity="0.5"/><rect x="38.43" y="152.70" width="5.49" height="1.1" fill="#569cd6" opacity="0.5"/><rect x="43.92" y="152.70" width="0.92" height="1.1" fill="#808080" opacity="0.5"/><rect x="10.98" y="154.61" width="1.83" height="1.1" fill="#808080" opacity="0.5"/><rect x="12.81" y="154.61" width="7.32" height="1.1" fill="#569cd6" opacity="0.5"/><rect x="20.13" y="154.61" width="0.92" height="1.1" fill="#808080" opacity="0.5"/><rect x="7.32" y="156.51" width="1.83" height="1.1" fill="#808080" opacity="0.5"/><rect x="9.15" y="156.51" width="5.49" height="1.1" fill="#569cd6" opacity="0.5"/><rect x="14.64" y="156.51" width="0.92" height="1.1" fill="#808080" opacity="0.5"/><rect x="7.32" y="158.42" width="1.83" height="1.1" fill="#808080" opacity="0.5"/><rect x="9.15" y="158.42" width="0.92" height="1.1" fill="#569cd6" opacity="0.5"/><rect x="10.07" y="158.42" width="0.92" height="1.1" fill="#808080" opacity="0.5"/><rect x="7.32" y="160.32" width="0.92" height="1.1" fill="#808080" opacity="0.5"/><rect x="8.23" y="160.32" width="0.92" height="1.1" fill="#569cd6" opacity="0.5"/><rect x="9.15" y="160.32" width="0.92" height="1.1" fill="#808080" opacity="0.5"/><rect x="7.32" y="162.23" width="0.92" height="1.1" fill="#808080" opacity="0.5"/><rect x="8.23" y="162.23" width="4.58" height="1.1" fill="#569cd6" opacity="0.5"/><rect x="13.73" y="162.23" width="2.75" height="1.1" fill="#9cdcfe" opacity="0.5"/><rect x="16.47" y="162.23" width="0.92" height="1.1" fill="#d4d4d4" opacity="0.5"/><rect x="17.39" y="162.23" width="8.23" height="1.1" fill="#ce9178" opacity="0.5"/><rect x="25.62" y="162.23" width="0.92" height="1.1" fill="#808080" opacity="0.5"/><rect x="26.54" y="162.23" width="5.49" height="1.1" fill="#d4d4d4" opacity="0.5"/><rect x="32.94" y="162.23" width="7.32" height="1.1" fill="#d4d4d4" opacity="0.5"/><rect x="41.18" y="162.23" width="1.83" height="1.1" fill="#808080" opacity="0.5"/><rect x="43.01" y="162.23" width="4.58" height="1.1" fill="#569cd6" opacity="0.5"/><rect x="47.58" y="162.23" width="0.92" height="1.1" fill="#808080" opacity="0.5"/><rect x="7.32" y="164.13" width="0.92" height="1.1" fill="#808080" opacity="0.5"/><rect x="8.23" y="164.13" width="4.58" height="1.1" fill="#569cd6" opacity="0.5"/><rect x="13.73" y="164.13" width="3.66" height="1.1" fill="#9cdcfe" opacity="0.5"/><rect x="17.39" y="164.13" width="0.92" height="1.1" fill="#d4d4d4" opacity="0.5"/><rect x="18.30" y="164.13" width="9.15" height="1.1" fill="#ce9178" opacity="0.5"/><rect x="28.37" y="164.13" width="3.66" height="1.1" fill="#9cdcfe" opacity="0.5"/><rect x="32.02" y="164.13" width="0.92" height="1.1" fill="#d4d4d4" opacity="0.5"/><rect x="32.94" y="164.13" width="8.23" height="1.1" fill="#ce9178" opacity="0.5"/><rect x="42.09" y="164.13" width="1.83" height="1.1" fill="#9cdcfe" opacity="0.5"/><rect x="43.92" y="164.13" width="0.92" height="1.1" fill="#d4d4d4" opacity="0.5"/><rect x="44.84" y="164.13" width="8.23" height="1.1" fill="#ce9178" opacity="0.5"/><rect x="53.07" y="164.13" width="0.92" height="1.1" fill="#808080" opacity="0.5"/><rect x="54.90" y="164.13" width="0.92" height="1.1" fill="#808080" opacity="0.5"/><rect x="55.82" y="164.13" width="7.32" height="1.1" fill="#569cd6" opacity="0.5"/><rect x="64.05" y="164.13" width="1.83" height="1.1" fill="#9cdcfe" opacity="0.5"/><rect x="65.88" y="164.13" width="0.92" height="1.1" fill="#d4d4d4" opacity="0.5"/><rect x="66.80" y="164.13" width="9.15" height="1.1" fill="#ce9178" opacity="0.5"/><rect x="75.95" y="164.13" width="0.92" height="1.1" fill="#808080" opacity="0.5"/><rect x="76.86" y="164.13" width="0.92" height="1.1" fill="#808080" opacity="0.5"/><rect x="77.78" y="164.13" width="5.49" height="1.1" fill="#569cd6" opacity="0.5"/><rect x="84.18" y="164.13" width="4.58" height="1.1" fill="#9cdcfe" opacity="0.5"/><rect x="88.76" y="164.13" width="0.92" height="1.1" fill="#d4d4d4" opacity="0.5"/><rect x="89.67" y="164.13" width="7.32" height="1.1" fill="#ce9178" opacity="0.5"/><rect x="7.32" y="166.04" width="1.83" height="1.1" fill="#808080" opacity="0.5"/><rect x="9.15" y="166.04" width="7.32" height="1.1" fill="#569cd6" opacity="0.5"/><rect x="16.47" y="166.04" width="0.92" height="1.1" fill="#808080" opacity="0.5"/><rect x="7.32" y="169.85" width="0.92" height="1.1" fill="#808080" opacity="0.5"/><rect x="8.23" y="169.85" width="4.58" height="1.1" fill="#569cd6" opacity="0.5"/><rect x="13.73" y="169.85" width="2.75" height="1.1" fill="#9cdcfe" opacity="0.5"/><rect x="16.47" y="169.85" width="0.92" height="1.1" fill="#d4d4d4" opacity="0.5"/><rect x="17.39" y="169.85" width="8.23" height="1.1" fill="#ce9178" opacity="0.5"/><rect x="25.62" y="169.85" width="0.92" height="1.1" fill="#808080" opacity="0.5"/><rect x="26.54" y="169.85" width="5.49" height="1.1" fill="#d4d4d4" opacity="0.5"/><rect x="32.94" y="169.85" width="7.32" height="1.1" fill="#d4d4d4" opacity="0.5"/><rect x="41.18" y="169.85" width="1.83" height="1.1" fill="#808080" opacity="0.5"/><rect x="43.01" y="169.85" width="4.58" height="1.1" fill="#569cd6" opacity="0.5"/><rect x="47.58" y="169.85" width="0.92" height="1.1" fill="#808080" opacity="0.5"/><rect x="7.32" y="171.75" width="0.92" height="1.1" fill="#808080" opacity="0.5"/><rect x="8.23" y="171.75" width="4.58" height="1.1" fill="#569cd6" opacity="0.5"/><rect x="13.73" y="171.75" width="3.66" height="1.1" fill="#9cdcfe" opacity="0.5"/><rect x="17.39" y="171.75" width="0.92" height="1.1" fill="#d4d4d4" opacity="0.5"/><rect x="18.30" y="171.75" width="10.07" height="1.1" fill="#ce9178" opacity="0.5"/><rect x="29.28" y="171.75" width="3.66" height="1.1" fill="#9cdcfe" opacity="0.5"/><rect x="32.94" y="171.75" width="0.92" height="1.1" fill="#d4d4d4" opacity="0.5"/><rect x="33.86" y="171.75" width="8.23" height="1.1" fill="#ce9178" opacity="0.5"/><rect x="43.01" y="171.75" width="1.83" height="1.1" fill="#9cdcfe" opacity="0.5"/><rect x="44.84" y="171.75" width="0.92" height="1.1" fill="#d4d4d4" opacity="0.5"/><rect x="45.75" y="171.75" width="8.23" height="1.1" fill="#ce9178" opacity="0.5"/><rect x="54.90" y="171.75" width="10.07" height="1.1" fill="#9cdcfe" opacity="0.5"/><rect x="64.97" y="171.75" width="0.92" height="1.1" fill="#d4d4d4" opacity="0.5"/><rect x="65.88" y="171.75" width="4.58" height="1.1" fill="#ce9178" opacity="0.5"/><rect x="71.37" y="171.75" width="4.58" height="1.1" fill="#ce9178" opacity="0.5"/><rect x="75.95" y="171.75" width="0.92" height="1.1" fill="#808080" opacity="0.5"/><rect x="7.32" y="173.66" width="0.92" height="1.1" fill="#808080" opacity="0.5"/><rect x="8.23" y="173.66" width="4.58" height="1.1" fill="#569cd6" opacity="0.5"/><rect x="13.73" y="173.66" width="3.66" height="1.1" fill="#9cdcfe" opacity="0.5"/><rect x="17.39" y="173.66" width="0.92" height="1.1" fill="#d4d4d4" opacity="0.5"/><rect x="18.30" y="173.66" width="10.07" height="1.1" fill="#ce9178" opacity="0.5"/><rect x="29.28" y="173.66" width="3.66" height="1.1" fill="#9cdcfe" opacity="0.5"/><rect x="32.94" y="173.66" width="0.92" height="1.1" fill="#d4d4d4" opacity="0.5"/><rect x="33.86" y="173.66" width="8.23" height="1.1" fill="#ce9178" opacity="0.5"/><rect x="43.01" y="173.66" width="1.83" height="1.1" fill="#9cdcfe" opacity="0.5"/><rect x="44.84" y="173.66" width="0.92" height="1.1" fill="#d4d4d4" opacity="0.5"/><rect x="45.75" y="173.66" width="8.23" height="1.1" fill="#ce9178" opacity="0.5"/><rect x="54.90" y="173.66" width="10.07" height="1.1" fill="#9cdcfe" opacity="0.5"/><rect x="64.97" y="173.66" width="0.92" height="1.1" fill="#d4d4d4" opacity="0.5"/><rect x="65.88" y="173.66" width="4.58" height="1.1" fill="#ce9178" opacity="0.5"/><rect x="71.37" y="173.66" width="4.58" height="1.1" fill="#ce9178" opacity="0.5"/><rect x="75.95" y="173.66" width="0.92" height="1.1" fill="#808080" opacity="0.5"/><rect x="7.32" y="175.56" width="1.83" height="1.1" fill="#808080" opacity="0.5"/><rect x="9.15" y="175.56" width="0.92" height="1.1" fill="#569cd6" opacity="0.5"/><rect x="10.07" y="175.56" width="0.92" height="1.1" fill="#808080" opacity="0.5"/><rect x="7.32" y="177.47" width="0.92" height="1.1" fill="#808080" opacity="0.5"/><rect x="8.23" y="177.47" width="0.92" height="1.1" fill="#569cd6" opacity="0.5"/><rect x="9.15" y="177.47" width="0.92" height="1.1" fill="#808080" opacity="0.5"/><rect x="7.32" y="179.37" width="0.92" height="1.1" fill="#808080" opacity="0.5"/><rect x="8.23" y="179.37" width="4.58" height="1.1" fill="#569cd6" opacity="0.5"/><rect x="13.73" y="179.37" width="2.75" height="1.1" fill="#9cdcfe" opacity="0.5"/><rect x="16.47" y="179.37" width="0.92" height="1.1" fill="#d4d4d4" opacity="0.5"/><rect x="17.39" y="179.37" width="4.58" height="1.1" fill="#ce9178" opacity="0.5"/><rect x="21.96" y="179.37" width="0.92" height="1.1" fill="#808080" opacity="0.5"/><rect x="22.88" y="179.37" width="7.32" height="1.1" fill="#d4d4d4" opacity="0.5"/><rect x="31.11" y="179.37" width="1.83" height="1.1" fill="#808080" opacity="0.5"/><rect x="32.94" y="179.37" width="4.58" height="1.1" fill="#569cd6" opacity="0.5"/><rect x="37.52" y="179.37" width="0.92" height="1.1" fill="#808080" opacity="0.5"/><rect x="7.32" y="181.28" width="0.92" height="1.1" fill="#808080" opacity="0.5"/><rect x="8.23" y="181.28" width="7.32" height="1.1" fill="#569cd6" opacity="0.5"/><rect x="16.47" y="181.28" width="3.66" height="1.1" fill="#9cdcfe" opacity="0.5"/><rect x="20.13" y="181.28" width="0.92" height="1.1" fill="#d4d4d4" opacity="0.5"/><rect x="21.05" y="181.28" width="4.58" height="1.1" fill="#ce9178" opacity="0.5"/><rect x="26.54" y="181.28" width="1.83" height="1.1" fill="#9cdcfe" opacity="0.5"/><rect x="28.37" y="181.28" width="0.92" height="1.1" fill="#d4d4d4" opacity="0.5"/><rect x="29.28" y="181.28" width="4.58" height="1.1" fill="#ce9178" opacity="0.5"/><rect x="34.77" y="181.28" width="3.66" height="1.1" fill="#9cdcfe" opacity="0.5"/><rect x="38.43" y="181.28" width="0.92" height="1.1" fill="#d4d4d4" opacity="0.5"/><rect x="39.34" y="181.28" width="3.66" height="1.1" fill="#ce9178" opacity="0.5"/><rect x="43.92" y="181.28" width="3.66" height="1.1" fill="#9cdcfe" opacity="0.5"/><rect x="47.58" y="181.28" width="0.92" height="1.1" fill="#d4d4d4" opacity="0.5"/><rect x="48.50" y="181.28" width="3.66" height="1.1" fill="#ce9178" opacity="0.5"/><rect x="52.16" y="181.28" width="0.92" height="1.1" fill="#808080" opacity="0.5"/><rect x="7.32" y="183.18" width="1.83" height="1.1" fill="#808080" opacity="0.5"/><rect x="9.15" y="183.18" width="7.32" height="1.1" fill="#569cd6" opacity="0.5"/><rect x="16.47" y="183.18" width="0.92" height="1.1" fill="#808080" opacity="0.5"/><rect x="7.32" y="185.09" width="1.83" height="1.1" fill="#808080" opacity="0.5"/><rect x="9.15" y="185.09" width="0.92" height="1.1" fill="#569cd6" opacity="0.5"/><rect x="10.07" y="185.09" width="0.92" height="1.1" fill="#808080" opacity="0.5"/><rect x="7.32" y="186.99" width="0.92" height="1.1" fill="#808080" opacity="0.5"/><rect x="8.23" y="186.99" width="0.92" height="1.1" fill="#569cd6" opacity="0.5"/><rect x="9.15" y="186.99" width="0.92" height="1.1" fill="#808080" opacity="0.5"/><rect x="10.98" y="188.90" width="0.92" height="1.1" fill="#808080" opacity="0.5"/><rect x="11.89" y="188.90" width="4.58" height="1.1" fill="#569cd6" opacity="0.5"/><rect x="17.39" y="188.90" width="2.75" height="1.1" fill="#9cdcfe" opacity="0.5"/><rect x="20.13" y="188.90" width="0.92" height="1.1" fill="#d4d4d4" opacity="0.5"/><rect x="21.05" y="188.90" width="2.75" height="1.1" fill="#ce9178" opacity="0.5"/><rect x="23.79" y="188.90" width="0.92" height="1.1" fill="#808080" opacity="0.5"/><rect x="24.71" y="188.90" width="4.58" height="1.1" fill="#d4d4d4" opacity="0.5"/><rect x="30.20" y="188.90" width="7.32" height="1.1" fill="#d4d4d4" opacity="0.5"/><rect x="38.43" y="188.90" width="1.83" height="1.1" fill="#808080" opacity="0.5"/><rect x="40.26" y="188.90" width="4.58" height="1.1" fill="#569cd6" opacity="0.5"/><rect x="44.84" y="188.90" width="0.92" height="1.1" fill="#808080" opacity="0.5"/><rect x="10.98" y="190.80" width="0.92" height="1.1" fill="#808080" opacity="0.5"/><rect x="11.89" y="190.80" width="4.58" height="1.1" fill="#569cd6" opacity="0.5"/><rect x="17.39" y="190.80" width="3.66" height="1.1" fill="#9cdcfe" opacity="0.5"/><rect x="21.05" y="190.80" width="0.92" height="1.1" fill="#d4d4d4" opacity="0.5"/><rect x="21.96" y="190.80" width="6.41" height="1.1" fill="#ce9178" opacity="0.5"/><rect x="29.28" y="190.80" width="3.66" height="1.1" fill="#9cdcfe" opacity="0.5"/><rect x="32.94" y="190.80" width="0.92" height="1.1" fill="#d4d4d4" opacity="0.5"/><rect x="33.86" y="190.80" width="7.32" height="1.1" fill="#ce9178" opacity="0.5"/><rect x="42.09" y="190.80" width="4.58" height="1.1" fill="#9cdcfe" opacity="0.5"/><rect x="46.66" y="190.80" width="0.92" height="1.1" fill="#d4d4d4" opacity="0.5"/><rect x="47.58" y="190.80" width="5.49" height="1.1" fill="#ce9178" opacity="0.5"/><rect x="53.07" y="190.80" width="0.92" height="1.1" fill="#808080" opacity="0.5"/><rect x="10.98" y="192.71" width="0.92" height="1.1" fill="#808080" opacity="0.5"/><rect x="11.89" y="192.71" width="4.58" height="1.1" fill="#569cd6" opacity="0.5"/><rect x="17.39" y="192.71" width="3.66" height="1.1" fill="#9cdcfe" opacity="0.5"/><rect x="21.05" y="192.71" width="0.92" height="1.1" fill="#d4d4d4" opacity="0.5"/><rect x="21.96" y="192.71" width="6.41" height="1.1" fill="#ce9178" opacity="0.5"/><rect x="29.28" y="192.71" width="3.66" height="1.1" fill="#9cdcfe" opacity="0.5"/><rect x="32.94" y="192.71" width="0.92" height="1.1" fill="#d4d4d4" opacity="0.5"/><rect x="33.86" y="192.71" width="7.32" height="1.1" fill="#ce9178" opacity="0.5"/><rect x="42.09" y="192.71" width="4.58" height="1.1" fill="#9cdcfe" opacity="0.5"/><rect x="46.66" y="192.71" width="0.92" height="1.1" fill="#d4d4d4" opacity="0.5"/><rect x="47.58" y="192.71" width="7.32" height="1.1" fill="#ce9178" opacity="0.5"/><rect x="54.90" y="192.71" width="0.92" height="1.1" fill="#808080" opacity="0.5"/><rect x="10.98" y="194.61" width="0.92" height="1.1" fill="#808080" opacity="0.5"/><rect x="11.89" y="194.61" width="4.58" height="1.1" fill="#569cd6" opacity="0.5"/><rect x="17.39" y="194.61" width="3.66" height="1.1" fill="#9cdcfe" opacity="0.5"/><rect x="21.05" y="194.61" width="0.92" height="1.1" fill="#d4d4d4" opacity="0.5"/><rect x="21.96" y="194.61" width="6.41" height="1.1" fill="#ce9178" opacity="0.5"/><rect x="29.28" y="194.61" width="3.66" height="1.1" fill="#9cdcfe" opacity="0.5"/><rect x="32.94" y="194.61" width="0.92" height="1.1" fill="#d4d4d4" opacity="0.5"/><rect x="33.86" y="194.61" width="7.32" height="1.1" fill="#ce9178" opacity="0.5"/><rect x="42.09" y="194.61" width="4.58" height="1.1" fill="#9cdcfe" opacity="0.5"/><rect x="46.66" y="194.61" width="0.92" height="1.1" fill="#d4d4d4" opacity="0.5"/><rect x="47.58" y="194.61" width="6.41" height="1.1" fill="#ce9178" opacity="0.5"/><rect x="53.98" y="194.61" width="0.92" height="1.1" fill="#808080" opacity="0.5"/><rect x="7.32" y="196.52" width="1.83" height="1.1" fill="#808080" opacity="0.5"/><rect x="9.15" y="196.52" width="0.92" height="1.1" fill="#569cd6" opacity="0.5"/><rect x="10.07" y="196.52" width="0.92" height="1.1" fill="#808080" opacity="0.5"/><rect x="7.32" y="198.42" width="0.92" height="1.1" fill="#808080" opacity="0.5"/><rect x="8.23" y="198.42" width="0.92" height="1.1" fill="#569cd6" opacity="0.5"/><rect x="9.15" y="198.42" width="0.92" height="1.1" fill="#808080" opacity="0.5"/><rect x="10.98" y="200.33" width="0.92" height="1.1" fill="#808080" opacity="0.5"/><rect x="11.89" y="200.33" width="4.58" height="1.1" fill="#569cd6" opacity="0.5"/><rect x="17.39" y="200.33" width="2.75" height="1.1" fill="#9cdcfe" opacity="0.5"/><rect x="20.13" y="200.33" width="0.92" height="1.1" fill="#d4d4d4" opacity="0.5"/><rect x="21.05" y="200.33" width="2.75" height="1.1" fill="#ce9178" opacity="0.5"/><rect x="23.79" y="200.33" width="0.92" height="1.1" fill="#808080" opacity="0.5"/><rect x="24.71" y="200.33" width="4.58" height="1.1" fill="#d4d4d4" opacity="0.5"/><rect x="30.20" y="200.33" width="5.49" height="1.1" fill="#d4d4d4" opacity="0.5"/><rect x="36.60" y="200.33" width="1.83" height="1.1" fill="#808080" opacity="0.5"/><rect x="38.43" y="200.33" width="4.58" height="1.1" fill="#569cd6" opacity="0.5"/><rect x="43.01" y="200.33" width="0.92" height="1.1" fill="#808080" opacity="0.5"/><rect x="10.98" y="202.23" width="0.92" height="1.1" fill="#808080" opacity="0.5"/><rect x="11.89" y="202.23" width="4.58" height="1.1" fill="#569cd6" opacity="0.5"/><rect x="17.39" y="202.23" width="3.66" height="1.1" fill="#9cdcfe" opacity="0.5"/><rect x="21.05" y="202.23" width="0.92" height="1.1" fill="#d4d4d4" opacity="0.5"/><rect x="21.96" y="202.23" width="9.15" height="1.1" fill="#ce9178" opacity="0.5"/><rect x="32.02" y="202.23" width="3.66" height="1.1" fill="#9cdcfe" opacity="0.5"/><rect x="35.69" y="202.23" width="0.92" height="1.1" fill="#d4d4d4" opacity="0.5"/><rect x="36.60" y="202.23" width="8.23" height="1.1" fill="#ce9178" opacity="0.5"/><rect x="45.75" y="202.23" width="4.58" height="1.1" fill="#9cdcfe" opacity="0.5"/><rect x="50.33" y="202.23" width="0.92" height="1.1" fill="#d4d4d4" opacity="0.5"/><rect x="51.24" y="202.23" width="5.49" height="1.1" fill="#ce9178" opacity="0.5"/><rect x="56.73" y="202.23" width="0.92" height="1.1" fill="#808080" opacity="0.5"/><rect x="10.98" y="204.14" width="0.92" height="1.1" fill="#808080" opacity="0.5"/><rect x="11.89" y="204.14" width="4.58" height="1.1" fill="#569cd6" opacity="0.5"/><rect x="17.39" y="204.14" width="3.66" height="1.1" fill="#9cdcfe" opacity="0.5"/><rect x="21.05" y="204.14" width="0.92" height="1.1" fill="#d4d4d4" opacity="0.5"/><rect x="21.96" y="204.14" width="9.15" height="1.1" fill="#ce9178" opacity="0.5"/><rect x="32.02" y="204.14" width="3.66" height="1.1" fill="#9cdcfe" opacity="0.5"/><rect x="35.69" y="204.14" width="0.92" height="1.1" fill="#d4d4d4" opacity="0.5"/><rect x="36.60" y="204.14" width="8.23" height="1.1" fill="#ce9178" opacity="0.5"/><rect x="45.75" y="204.14" width="4.58" height="1.1" fill="#9cdcfe" opacity="0.5"/><rect x="50.33" y="204.14" width="0.92" height="1.1" fill="#d4d4d4" opacity="0.5"/><rect x="51.24" y="204.14" width="4.58" height="1.1" fill="#ce9178" opacity="0.5"/><rect x="55.82" y="204.14" width="0.92" height="1.1" fill="#808080" opacity="0.5"/><rect x="10.98" y="206.04" width="0.92" height="1.1" fill="#808080" opacity="0.5"/><rect x="11.89" y="206.04" width="4.58" height="1.1" fill="#569cd6" opacity="0.5"/><rect x="17.39" y="206.04" width="3.66" height="1.1" fill="#9cdcfe" opacity="0.5"/><rect x="21.05" y="206.04" width="0.92" height="1.1" fill="#d4d4d4" opacity="0.5"/><rect x="21.96" y="206.04" width="9.15" height="1.1" fill="#ce9178" opacity="0.5"/><rect x="32.02" y="206.04" width="3.66" height="1.1" fill="#9cdcfe" opacity="0.5"/><rect x="35.69" y="206.04" width="0.92" height="1.1" fill="#d4d4d4" opacity="0.5"/><rect x="36.60" y="206.04" width="8.23" height="1.1" fill="#ce9178" opacity="0.5"/><rect x="45.75" y="206.04" width="4.58" height="1.1" fill="#9cdcfe" opacity="0.5"/><rect x="50.33" y="206.04" width="0.92" height="1.1" fill="#d4d4d4" opacity="0.5"/><rect x="51.24" y="206.04" width="5.49" height="1.1" fill="#ce9178" opacity="0.5"/><rect x="56.73" y="206.04" width="0.92" height="1.1" fill="#808080" opacity="0.5"/><rect x="7.32" y="207.95" width="1.83" height="1.1" fill="#808080" opacity="0.5"/><rect x="9.15" y="207.95" width="0.92" height="1.1" fill="#569cd6" opacity="0.5"/><rect x="10.07" y="207.95" width="0.92" height="1.1" fill="#808080" opacity="0.5"/><rect x="7.32" y="209.85" width="0.92" height="1.1" fill="#808080" opacity="0.5"/><rect x="8.23" y="209.85" width="0.92" height="1.1" fill="#569cd6" opacity="0.5"/><rect x="9.15" y="209.85" width="0.92" height="1.1" fill="#808080" opacity="0.5"/><rect x="10.98" y="211.76" width="0.92" height="1.1" fill="#808080" opacity="0.5"/><rect x="11.89" y="211.76" width="4.58" height="1.1" fill="#569cd6" opacity="0.5"/><rect x="17.39" y="211.76" width="2.75" height="1.1" fill="#9cdcfe" opacity="0.5"/><rect x="20.13" y="211.76" width="0.92" height="1.1" fill="#d4d4d4" opacity="0.5"/><rect x="21.05" y="211.76" width="2.75" height="1.1" fill="#ce9178" opacity="0.5"/><rect x="23.79" y="211.76" width="0.92" height="1.1" fill="#808080" opacity="0.5"/><rect x="24.71" y="211.76" width="5.49" height="1.1" fill="#d4d4d4" opacity="0.5"/><rect x="31.11" y="211.76" width="3.66" height="1.1" fill="#d4d4d4" opacity="0.5"/><rect x="35.69" y="211.76" width="1.83" height="1.1" fill="#808080" opacity="0.5"/><rect x="37.52" y="211.76" width="4.58" height="1.1" fill="#569cd6" opacity="0.5"/><rect x="42.09" y="211.76" width="0.92" height="1.1" fill="#808080" opacity="0.5"/><rect x="10.98" y="213.66" width="0.92" height="1.1" fill="#808080" opacity="0.5"/><rect x="11.89" y="213.66" width="4.58" height="1.1" fill="#569cd6" opacity="0.5"/><rect x="17.39" y="213.66" width="3.66" height="1.1" fill="#9cdcfe" opacity="0.5"/><rect x="21.05" y="213.66" width="0.92" height="1.1" fill="#d4d4d4" opacity="0.5"/><rect x="21.96" y="213.66" width="9.15" height="1.1" fill="#ce9178" opacity="0.5"/><rect x="32.02" y="213.66" width="3.66" height="1.1" fill="#9cdcfe" opacity="0.5"/><rect x="35.69" y="213.66" width="0.92" height="1.1" fill="#d4d4d4" opacity="0.5"/><rect x="36.60" y="213.66" width="2.75" height="1.1" fill="#ce9178" opacity="0.5"/><rect x="40.26" y="213.66" width="4.58" height="1.1" fill="#9cdcfe" opacity="0.5"/><rect x="44.84" y="213.66" width="0.92" height="1.1" fill="#d4d4d4" opacity="0.5"/><rect x="45.75" y="213.66" width="2.75" height="1.1" fill="#ce9178" opacity="0.5"/><rect x="48.50" y="213.66" width="0.92" height="1.1" fill="#808080" opacity="0.5"/><rect x="10.98" y="215.57" width="0.92" height="1.1" fill="#808080" opacity="0.5"/><rect x="11.89" y="215.57" width="4.58" height="1.1" fill="#569cd6" opacity="0.5"/><rect x="17.39" y="215.57" width="3.66" height="1.1" fill="#9cdcfe" opacity="0.5"/><rect x="21.05" y="215.57" width="0.92" height="1.1" fill="#d4d4d4" opacity="0.5"/><rect x="21.96" y="215.57" width="9.15" height="1.1" fill="#ce9178" opacity="0.5"/><rect x="32.02" y="215.57" width="3.66" height="1.1" fill="#9cdcfe" opacity="0.5"/><rect x="35.69" y="215.57" width="0.92" height="1.1" fill="#d4d4d4" opacity="0.5"/><rect x="36.60" y="215.57" width="2.75" height="1.1" fill="#ce9178" opacity="0.5"/><rect x="40.26" y="215.57" width="4.58" height="1.1" fill="#9cdcfe" opacity="0.5"/><rect x="44.84" y="215.57" width="0.92" height="1.1" fill="#d4d4d4" opacity="0.5"/><rect x="45.75" y="215.57" width="2.75" height="1.1" fill="#ce9178" opacity="0.5"/><rect x="48.50" y="215.57" width="0.92" height="1.1" fill="#808080" opacity="0.5"/><rect x="10.98" y="217.47" width="0.92" height="1.1" fill="#808080" opacity="0.5"/><rect x="11.89" y="217.47" width="4.58" height="1.1" fill="#569cd6" opacity="0.5"/><rect x="17.39" y="217.47" width="3.66" height="1.1" fill="#9cdcfe" opacity="0.5"/><rect x="21.05" y="217.47" width="0.92" height="1.1" fill="#d4d4d4" opacity="0.5"/><rect x="21.96" y="217.47" width="9.15" height="1.1" fill="#ce9178" opacity="0.5"/><rect x="32.02" y="217.47" width="3.66" height="1.1" fill="#9cdcfe" opacity="0.5"/><rect x="35.69" y="217.47" width="0.92" height="1.1" fill="#d4d4d4" opacity="0.5"/><rect x="36.60" y="217.47" width="2.75" height="1.1" fill="#ce9178" opacity="0.5"/><rect x="40.26" y="217.47" width="4.58" height="1.1" fill="#9cdcfe" opacity="0.5"/><rect x="44.84" y="217.47" width="0.92" height="1.1" fill="#d4d4d4" opacity="0.5"/><rect x="45.75" y="217.47" width="2.75" height="1.1" fill="#ce9178" opacity="0.5"/><rect x="48.50" y="217.47" width="0.92" height="1.1" fill="#808080" opacity="0.5"/><rect x="7.32" y="219.38" width="1.83" height="1.1" fill="#808080" opacity="0.5"/><rect x="9.15" y="219.38" width="0.92" height="1.1" fill="#569cd6" opacity="0.5"/><rect x="10.07" y="219.38" width="0.92" height="1.1" fill="#808080" opacity="0.5"/><rect x="7.32" y="221.28" width="0.92" height="1.1" fill="#808080" opacity="0.5"/><rect x="8.23" y="221.28" width="0.92" height="1.1" fill="#569cd6" opacity="0.5"/><rect x="9.15" y="221.28" width="0.92" height="1.1" fill="#808080" opacity="0.5"/><rect x="7.32" y="223.19" width="0.92" height="1.1" fill="#808080" opacity="0.5"/><rect x="8.23" y="223.19" width="4.58" height="1.1" fill="#569cd6" opacity="0.5"/><rect x="13.73" y="223.19" width="2.75" height="1.1" fill="#9cdcfe" opacity="0.5"/><rect x="16.47" y="223.19" width="0.92" height="1.1" fill="#d4d4d4" opacity="0.5"/><rect x="17.39" y="223.19" width="2.75" height="1.1" fill="#ce9178" opacity="0.5"/><rect x="20.13" y="223.19" width="0.92" height="1.1" fill="#808080" opacity="0.5"/><rect x="21.05" y="223.19" width="6.41" height="1.1" fill="#d4d4d4" opacity="0.5"/><rect x="28.37" y="223.19" width="6.41" height="1.1" fill="#d4d4d4" opacity="0.5"/><rect x="35.69" y="223.19" width="1.83" height="1.1" fill="#808080" opacity="0.5"/><rect x="37.52" y="223.19" width="4.58" height="1.1" fill="#569cd6" opacity="0.5"/><rect x="42.09" y="223.19" width="0.92" height="1.1" fill="#808080" opacity="0.5"/><rect x="7.32" y="225.09" width="0.92" height="1.1" fill="#808080" opacity="0.5"/><rect x="8.23" y="225.09" width="5.49" height="1.1" fill="#569cd6" opacity="0.5"/><rect x="14.64" y="225.09" width="3.66" height="1.1" fill="#9cdcfe" opacity="0.5"/><rect x="18.30" y="225.09" width="0.92" height="1.1" fill="#d4d4d4" opacity="0.5"/><rect x="19.21" y="225.09" width="2.75" height="1.1" fill="#ce9178" opacity="0.5"/><rect x="22.88" y="225.09" width="1.83" height="1.1" fill="#9cdcfe" opacity="0.5"/><rect x="24.71" y="225.09" width="0.92" height="1.1" fill="#d4d4d4" opacity="0.5"/><rect x="25.62" y="225.09" width="2.75" height="1.1" fill="#ce9178" opacity="0.5"/><rect x="29.28" y="225.09" width="7.32" height="1.1" fill="#9cdcfe" opacity="0.5"/><rect x="37.52" y="225.09" width="3.66" height="1.1" fill="#9cdcfe" opacity="0.5"/><rect x="41.18" y="225.09" width="0.92" height="1.1" fill="#d4d4d4" opacity="0.5"/><rect x="42.09" y="225.09" width="2.75" height="1.1" fill="#ce9178" opacity="0.5"/><rect x="44.84" y="225.09" width="0.92" height="1.1" fill="#808080" opacity="0.5"/><rect x="10.98" y="227.00" width="0.92" height="1.1" fill="#808080" opacity="0.5"/><rect x="11.89" y="227.00" width="5.49" height="1.1" fill="#569cd6" opacity="0.5"/><rect x="18.30" y="227.00" width="4.58" height="1.1" fill="#9cdcfe" opacity="0.5"/><rect x="22.88" y="227.00" width="0.92" height="1.1" fill="#d4d4d4" opacity="0.5"/><rect x="23.79" y="227.00" width="2.75" height="1.1" fill="#ce9178" opacity="0.5"/><rect x="26.54" y="227.00" width="0.92" height="1.1" fill="#808080" opacity="0.5"/><rect x="27.45" y="227.00" width="4.58" height="1.1" fill="#d4d4d4" opacity="0.5"/><rect x="32.02" y="227.00" width="1.83" height="1.1" fill="#808080" opacity="0.5"/><rect x="33.86" y="227.00" width="5.49" height="1.1" fill="#569cd6" opacity="0.5"/><rect x="39.34" y="227.00" width="0.92" height="1.1" fill="#808080" opacity="0.5"/><rect x="10.98" y="228.90" width="0.92" height="1.1" fill="#808080" opacity="0.5"/><rect x="11.89" y="228.90" width="5.49" height="1.1" fill="#569cd6" opacity="0.5"/><rect x="18.30" y="228.90" width="4.58" height="1.1" fill="#9cdcfe" opacity="0.5"/><rect x="22.88" y="228.90" width="0.92" height="1.1" fill="#d4d4d4" opacity="0.5"/><rect x="23.79" y="228.90" width="2.75" height="1.1" fill="#ce9178" opacity="0.5"/><rect x="26.54" y="228.90" width="0.92" height="1.1" fill="#808080" opacity="0.5"/><rect x="27.45" y="228.90" width="5.49" height="1.1" fill="#d4d4d4" opacity="0.5"/><rect x="32.94" y="228.90" width="1.83" height="1.1" fill="#808080" opacity="0.5"/><rect x="34.77" y="228.90" width="5.49" height="1.1" fill="#569cd6" opacity="0.5"/><rect x="40.26" y="228.90" width="0.92" height="1.1" fill="#808080" opacity="0.5"/><rect x="10.98" y="230.81" width="0.92" height="1.1" fill="#808080" opacity="0.5"/><rect x="11.89" y="230.81" width="5.49" height="1.1" fill="#569cd6" opacity="0.5"/><rect x="18.30" y="230.81" width="4.58" height="1.1" fill="#9cdcfe" opacity="0.5"/><rect x="22.88" y="230.81" width="0.92" height="1.1" fill="#d4d4d4" opacity="0.5"/><rect x="23.79" y="230.81" width="2.75" height="1.1" fill="#ce9178" opacity="0.5"/><rect x="26.54" y="230.81" width="0.92" height="1.1" fill="#808080" opacity="0.5"/><rect x="27.45" y="230.81" width="5.49" height="1.1" fill="#d4d4d4" opacity="0.5"/><rect x="32.94" y="230.81" width="1.83" height="1.1" fill="#808080" opacity="0.5"/><rect x="34.77" y="230.81" width="5.49" height="1.1" fill="#569cd6" opacity="0.5"/><rect x="40.26" y="230.81" width="0.92" height="1.1" fill="#808080" opacity="0.5"/><rect x="10.98" y="232.71" width="0.92" height="1.1" fill="#808080" opacity="0.5"/><rect x="11.89" y="232.71" width="5.49" height="1.1" fill="#569cd6" opacity="0.5"/><rect x="18.30" y="232.71" width="4.58" height="1.1" fill="#9cdcfe" opacity="0.5"/><rect x="22.88" y="232.71" width="0.92" height="1.1" fill="#d4d4d4" opacity="0.5"/><rect x="23.79" y="232.71" width="2.75" height="1.1" fill="#ce9178" opacity="0.5"/><rect x="26.54" y="232.71" width="0.92" height="1.1" fill="#808080" opacity="0.5"/><rect x="27.45" y="232.71" width="5.49" height="1.1" fill="#d4d4d4" opacity="0.5"/><rect x="32.94" y="232.71" width="1.83" height="1.1" fill="#808080" opacity="0.5"/><rect x="34.77" y="232.71" width="5.49" height="1.1" fill="#569cd6" opacity="0.5"/><rect x="40.26" y="232.71" width="0.92" height="1.1" fill="#808080" opacity="0.5"/><rect x="10.98" y="234.62" width="0.92" height="1.1" fill="#808080" opacity="0.5"/><rect x="11.89" y="234.62" width="5.49" height="1.1" fill="#569cd6" opacity="0.5"/><rect x="18.30" y="234.62" width="4.58" height="1.1" fill="#9cdcfe" opacity="0.5"/><rect x="22.88" y="234.62" width="0.92" height="1.1" fill="#d4d4d4" opacity="0.5"/><rect x="23.79" y="234.62" width="2.75" height="1.1" fill="#ce9178" opacity="0.5"/><rect x="26.54" y="234.62" width="0.92" height="1.1" fill="#808080" opacity="0.5"/><rect x="27.45" y="234.62" width="4.58" height="1.1" fill="#d4d4d4" opacity="0.5"/><rect x="32.02" y="234.62" width="1.83" height="1.1" fill="#808080" opacity="0.5"/><rect x="33.86" y="234.62" width="5.49" height="1.1" fill="#569cd6" opacity="0.5"/><rect x="39.34" y="234.62" width="0.92" height="1.1" fill="#808080" opacity="0.5"/><rect x="7.32" y="236.52" width="1.83" height="1.1" fill="#808080" opacity="0.5"/><rect x="9.15" y="236.52" width="5.49" height="1.1" fill="#569cd6" opacity="0.5"/><rect x="14.64" y="236.52" width="0.92" height="1.1" fill="#808080" opacity="0.5"/><rect x="7.32" y="238.43" width="1.83" height="1.1" fill="#808080" opacity="0.5"/><rect x="9.15" y="238.43" width="0.92" height="1.1" fill="#569cd6" opacity="0.5"/><rect x="10.07" y="238.43" width="0.92" height="1.1" fill="#808080" opacity="0.5"/><rect x="7.32" y="240.33" width="0.92" height="1.1" fill="#808080" opacity="0.5"/><rect x="8.23" y="240.33" width="0.92" height="1.1" fill="#569cd6" opacity="0.5"/><rect x="9.15" y="240.33" width="0.92" height="1.1" fill="#808080" opacity="0.5"/><rect x="7.32" y="242.24" width="0.92" height="1.1" fill="#808080" opacity="0.5"/><rect x="8.23" y="242.24" width="5.49" height="1.1" fill="#569cd6" opacity="0.5"/><rect x="14.64" y="242.24" width="3.66" height="1.1" fill="#9cdcfe" opacity="0.5"/><rect x="18.30" y="242.24" width="0.92" height="1.1" fill="#d4d4d4" opacity="0.5"/><rect x="19.21" y="242.24" width="7.32" height="1.1" fill="#ce9178" opacity="0.5"/><rect x="27.45" y="242.24" width="4.58" height="1.1" fill="#9cdcfe" opacity="0.5"/><rect x="32.02" y="242.24" width="0.92" height="1.1" fill="#d4d4d4" opacity="0.5"/><rect x="32.94" y="242.24" width="7.32" height="1.1" fill="#ce9178" opacity="0.5"/><rect x="40.26" y="242.24" width="0.92" height="1.1" fill="#808080" opacity="0.5"/><rect x="41.18" y="242.24" width="5.49" height="1.1" fill="#d4d4d4" opacity="0.5"/><rect x="47.58" y="242.24" width="3.66" height="1.1" fill="#d4d4d4" opacity="0.5"/><rect x="51.24" y="242.24" width="1.83" height="1.1" fill="#808080" opacity="0.5"/><rect x="53.07" y="242.24" width="5.49" height="1.1" fill="#569cd6" opacity="0.5"/><rect x="58.56" y="242.24" width="0.92" height="1.1" fill="#808080" opacity="0.5"/><rect x="7.32" y="244.14" width="1.83" height="1.1" fill="#808080" opacity="0.5"/><rect x="9.15" y="244.14" width="0.92" height="1.1" fill="#569cd6" opacity="0.5"/><rect x="10.07" y="244.14" width="0.92" height="1.1" fill="#808080" opacity="0.5"/><rect x="7.32" y="246.05" width="0.92" height="1.1" fill="#808080" opacity="0.5"/><rect x="8.23" y="246.05" width="0.92" height="1.1" fill="#569cd6" opacity="0.5"/><rect x="9.15" y="246.05" width="0.92" height="1.1" fill="#808080" opacity="0.5"/><rect x="7.32" y="247.95" width="0.92" height="1.1" fill="#808080" opacity="0.5"/><rect x="8.23" y="247.95" width="4.58" height="1.1" fill="#569cd6" opacity="0.5"/><rect x="13.73" y="247.95" width="3.66" height="1.1" fill="#9cdcfe" opacity="0.5"/><rect x="17.39" y="247.95" width="0.92" height="1.1" fill="#d4d4d4" opacity="0.5"/><rect x="18.30" y="247.95" width="7.32" height="1.1" fill="#ce9178" opacity="0.5"/><rect x="26.54" y="247.95" width="4.58" height="1.1" fill="#9cdcfe" opacity="0.5"/><rect x="31.11" y="247.95" width="0.92" height="1.1" fill="#d4d4d4" opacity="0.5"/><rect x="32.02" y="247.95" width="7.32" height="1.1" fill="#ce9178" opacity="0.5"/><rect x="39.34" y="247.95" width="0.92" height="1.1" fill="#808080" opacity="0.5"/><rect x="7.32" y="249.86" width="0.92" height="1.1" fill="#808080" opacity="0.5"/><rect x="8.23" y="249.86" width="4.58" height="1.1" fill="#569cd6" opacity="0.5"/><rect x="13.73" y="249.86" width="3.66" height="1.1" fill="#9cdcfe" opacity="0.5"/><rect x="17.39" y="249.86" width="0.92" height="1.1" fill="#d4d4d4" opacity="0.5"/><rect x="18.30" y="249.86" width="6.41" height="1.1" fill="#ce9178" opacity="0.5"/><rect x="25.62" y="249.86" width="4.58" height="1.1" fill="#9cdcfe" opacity="0.5"/><rect x="30.20" y="249.86" width="0.92" height="1.1" fill="#d4d4d4" opacity="0.5"/><rect x="31.11" y="249.86" width="6.41" height="1.1" fill="#ce9178" opacity="0.5"/><rect x="37.52" y="249.86" width="0.92" height="1.1" fill="#808080" opacity="0.5"/><rect x="7.32" y="251.76" width="0.92" height="1.1" fill="#808080" opacity="0.5"/><rect x="8.23" y="251.76" width="4.58" height="1.1" fill="#569cd6" opacity="0.5"/><rect x="13.73" y="251.76" width="3.66" height="1.1" fill="#9cdcfe" opacity="0.5"/><rect x="17.39" y="251.76" width="0.92" height="1.1" fill="#d4d4d4" opacity="0.5"/><rect x="18.30" y="251.76" width="7.32" height="1.1" fill="#ce9178" opacity="0.5"/><rect x="26.54" y="251.76" width="4.58" height="1.1" fill="#9cdcfe" opacity="0.5"/><rect x="31.11" y="251.76" width="0.92" height="1.1" fill="#d4d4d4" opacity="0.5"/><rect x="32.02" y="251.76" width="5.49" height="1.1" fill="#ce9178" opacity="0.5"/><rect x="38.43" y="251.76" width="2.75" height="1.1" fill="#ce9178" opacity="0.5"/><rect x="42.09" y="251.76" width="6.41" height="1.1" fill="#9cdcfe" opacity="0.5"/><rect x="48.50" y="251.76" width="0.92" height="1.1" fill="#d4d4d4" opacity="0.5"/><rect x="49.41" y="251.76" width="11.89" height="1.1" fill="#ce9178" opacity="0.5"/><rect x="61.30" y="251.76" width="0.92" height="1.1" fill="#808080" opacity="0.5"/><rect x="3.66" y="253.67" width="1.83" height="1.1" fill="#808080" opacity="0.5"/><rect x="5.49" y="253.67" width="0.92" height="1.1" fill="#569cd6" opacity="0.5"/><rect x="6.41" y="253.67" width="0.92" height="1.1" fill="#808080" opacity="0.5"/><rect x="3.66" y="259.38" width="1.83" height="1.1" fill="#808080" opacity="0.5"/><rect x="5.49" y="259.38" width="7.32" height="1.1" fill="#569cd6" opacity="0.5"/><rect x="12.81" y="259.38" width="0.92" height="1.1" fill="#808080" opacity="0.5"/><rect x="0.00" y="263.19" width="1.83" height="1.1" fill="#808080" opacity="0.5"/><rect x="1.83" y="263.19" width="3.66" height="1.1" fill="#569cd6" opacity="0.5"/><rect x="5.49" y="263.19" width="0.92" height="1.1" fill="#808080" opacity="0.5"/><rect x="0.00" y="265.10" width="1.83" height="1.1" fill="#808080" opacity="0.5"/><rect x="1.83" y="265.10" width="3.66" height="1.1" fill="#569cd6" opacity="0.5"/><rect x="5.49" y="265.10" width="0.92" height="1.1" fill="#808080" opacity="0.5"/><rect x="0.00" y="267.00" width="0.92" height="1.1" fill="#808080" opacity="0.5"/><rect x="0.92" y="267.00" width="4.58" height="1.1" fill="#569cd6" opacity="0.5"/><rect x="5.49" y="267.00" width="0.92" height="1.1" fill="#808080" opacity="0.5"/><rect x="3.66" y="268.91" width="7.32" height="1.1" fill="#d7ba7d" opacity="0.5"/><rect x="10.98" y="268.91" width="0.92" height="1.1" fill="#d4d4d4" opacity="0.5"/><rect x="14.64" y="270.81" width="4.58" height="1.1" fill="#9cdcfe" opacity="0.5"/><rect x="19.21" y="270.81" width="0.92" height="1.1" fill="#d4d4d4" opacity="0.5"/><rect x="21.05" y="270.81" width="2.75" height="1.1" fill="#ce9178" opacity="0.5"/><rect x="23.79" y="270.81" width="0.92" height="1.1" fill="#d4d4d4" opacity="0.5"/><rect x="14.64" y="272.72" width="5.49" height="1.1" fill="#9cdcfe" opacity="0.5"/><rect x="20.13" y="272.72" width="0.92" height="1.1" fill="#d4d4d4" opacity="0.5"/><rect x="21.96" y="272.72" width="0.92" height="1.1" fill="#ce9178" opacity="0.5"/><rect x="23.79" y="272.72" width="3.66" height="1.1" fill="#ce9178" opacity="0.5"/><rect x="27.45" y="272.72" width="0.92" height="1.1" fill="#d4d4d4" opacity="0.5"/><rect x="14.64" y="274.62" width="6.41" height="1.1" fill="#9cdcfe" opacity="0.5"/><rect x="21.05" y="274.62" width="0.92" height="1.1" fill="#d4d4d4" opacity="0.5"/><rect x="22.88" y="274.62" width="3.66" height="1.1" fill="#ce9178" opacity="0.5"/><rect x="26.54" y="274.62" width="0.92" height="1.1" fill="#d4d4d4" opacity="0.5"/><rect x="3.66" y="280.34" width="0.92" height="1.1" fill="#d4d4d4" opacity="0.5"/><rect x="3.66" y="282.24" width="5.49" height="1.1" fill="#d7ba7d" opacity="0.5"/><rect x="9.15" y="282.24" width="0.92" height="1.1" fill="#d4d4d4" opacity="0.5"/><rect x="14.64" y="284.15" width="4.58" height="1.1" fill="#9cdcfe" opacity="0.5"/><rect x="19.21" y="284.15" width="0.92" height="1.1" fill="#d4d4d4" opacity="0.5"/><rect x="21.05" y="284.15" width="2.75" height="1.1" fill="#ce9178" opacity="0.5"/><rect x="23.79" y="284.15" width="0.92" height="1.1" fill="#d4d4d4" opacity="0.5"/><rect x="14.64" y="286.05" width="8.23" height="1.1" fill="#9cdcfe" opacity="0.5"/><rect x="22.88" y="286.05" width="0.92" height="1.1" fill="#d4d4d4" opacity="0.5"/><rect x="24.71" y="286.05" width="3.66" height="1.1" fill="#ce9178" opacity="0.5"/><rect x="28.37" y="286.05" width="0.92" height="1.1" fill="#d4d4d4" opacity="0.5"/><rect x="3.66" y="287.96" width="0.92" height="1.1" fill="#d4d4d4" opacity="0.5"/><rect x="0.00" y="289.86" width="1.83" height="1.1" fill="#808080" opacity="0.5"/><rect x="1.83" y="289.86" width="4.58" height="1.1" fill="#569cd6" opacity="0.5"/><rect x="6.41" y="289.86" width="0.92" height="1.1" fill="#808080" opacity="0.5"/><rect x="0.00" y="291.77" width="1.83" height="1.1" fill="#808080" opacity="0.5"/><rect x="1.83" y="291.77" width="3.66" height="1.1" fill="#569cd6" opacity="0.5"/><rect x="5.49" y="291.77" width="0.92" height="1.1" fill="#808080" opacity="0.5"/></svg>
<div class="a" style="left:1250px;top:96px;width:16px;height:79px;background:#2f2f2f"></div>
<div class="a" style="left:1250px;top:96px;width:1px;height:563px;background:#2a2a2a"></div>
<div class="a" style="left:0;top:659px;width:1266px;height:24px;background:#007acc"></div>
<svg class="a" style="left:17px;top:663px" width="15" height="15" viewBox="0 0 15 15" fill="none" stroke="#ffffff" stroke-width="1.2"><circle cx="7.5" cy="7.5" r="6.3"/><path d="M5 5 L10 10 M10 5 L5 10"/></svg>
<span class="a" style="left:35.5px;top:664px;font-size:13px;color:#ffffff">0</span>
<svg class="a" style="left:47px;top:663px" width="16" height="15" viewBox="0 0 16 15" fill="none" stroke="#ffffff" stroke-width="1.2"><path d="M8 1.5 L14.8 13.5 H1.2 Z M8 5.5 V9.5 M8 10.8 V12"/></svg>
<span class="a" style="left:65.5px;top:664px;font-size:13px;color:#ffffff">0</span>
<span class="a" style="left:716px;top:664px;font-size:13.5px;color:#ffffff">Ln 1, Col 1</span>
<span class="a" style="left:796px;top:664px;font-size:13.5px;color:#ffffff;transform:scaleX(0.9088);transform-origin:0 0">Spaces: 4</span>
<span class="a" style="left:867px;top:664px;font-size:13.5px;color:#ffffff;transform:scaleX(0.9300);transform-origin:0 0">UTF-8</span>
<span class="a" style="left:920px;top:664px;font-size:13.5px;color:#ffffff;transform:scaleX(0.8200);transform-origin:0 0">CRLF</span>
<span class="a" style="left:987.4px;top:664px;font-size:13.5px;color:#ffffff;transform:scaleX(0.9357);transform-origin:0 0">HTML</span>
<span class="a" style="left:1058.6px;top:664px;font-size:13.5px;color:#ffffff;transform:scaleX(0.9219);transform-origin:0 0">Go Live</span>
<span class="a" style="left:1139.7px;top:664px;font-size:13.5px;color:#ffffff;transform:scaleX(1.0009);transform-origin:0 0">Prettier</span>
<svg class="a" style="left:964px;top:662px" width="18" height="17" viewBox="0 0 18 17" fill="none" stroke="#fff" stroke-width="1.2"><path d="M7 2 C5.5 2 5 3 5 4.5 V6.3 C5 7.3 4.3 7.9 3 8 C4.3 8.1 5 8.7 5 9.7 V11.8 C5 13.3 5.5 14 7 14"/><path d="M10.5 2 C12 2 12.5 3 12.5 4.5 V6 C12.5 7 13.2 7.6 14.5 7.8"/><circle cx="12.5" cy="12" r="3.6" fill="#fff" stroke="none"/><path d="M11.3 10.8 L13.7 13.2 M13.7 10.8 L11.3 13.2" stroke="#333" stroke-width="0.9"/></svg>
<svg class="a" style="left:1040px;top:663px" width="13" height="16" viewBox="0 0 13 16" fill="none" stroke="#ffffff" stroke-width="1.2"><circle cx="6.5" cy="6" r="1.6" fill="#ffffff"/><path d="M6.5 7.5 V15"/><path d="M3.5 9 A4 4 0 1 1 9.5 9"/><path d="M2 11 A6 6 0 1 1 11 11"/></svg>
<svg class="a" style="left:1119px;top:664px" width="16" height="13" viewBox="0 0 16 13" fill="none" stroke="#ffffff" stroke-width="1.2"><path d="M1 7 L4 10.5 L10 2 M6 9 L7.5 10.5 L15 1"/></svg>
<svg class="a" style="left:1200px;top:662px" width="16" height="16" viewBox="0 0 16 16" fill="none" stroke="#ffffff" stroke-width="1.2"><circle cx="5.5" cy="7" r="3"/><path d="M0.8 15 C1.5 11 9.5 11 10.2 15"/><path d="M7 2 H15 V8 H11.5 L9.5 10"/></svg>
<svg class="a" style="left:1234px;top:662px" width="14" height="16" viewBox="0 0 14 16" fill="none" stroke="#ffffff" stroke-width="1.2"><path d="M2.5 12 V7 C2.5 4 4.5 2 7 2 C9.5 2 11.5 4 11.5 7 V12 L13 13 H1 Z M5.5 14.5 C6 15.5 8 15.5 8.5 14.5"/></svg>
<div class="a" style="left:0;top:683px;width:1266px;height:28px;background:#1c1c1c"></div>
<svg class="a" style="left:9px;top:690px" width="16" height="16" viewBox="0 0 16 16" fill="#ffffff"><path d="M0 2.2 L6.5 1.3 V7.5 H0 Z M7.3 1.2 L16 0 V7.5 H7.3 Z M0 8.3 H6.5 V14.7 L0 13.8 Z M7.3 8.3 H16 V16 L7.3 14.8 Z"/></svg>
<div class="a" style="left:34px;top:684px;width:238px;height:27px;background:#f0f0f0"></div>
<svg class="a" style="left:44px;top:689px" width="16" height="17" viewBox="0 0 16 17" fill="none" stroke="#222" stroke-width="1.3"><circle cx="10" cy="6" r="4.6"/><path d="M6.7 9.3 L1 15.5"/></svg>
<span class="a" style="left:70.5px;top:689.5px;font-size:13.5px;color:#222;transform:scaleX(0.97);transform-origin:0 0">Search</span>
<svg class="a" style="left:210px;top:683px" width="62" height="28" viewBox="0 0 62 28"><path d="M29 10 L40 3.5" stroke="#ece6f2" stroke-width="3.6" stroke-linecap="round"/><path d="M27 8 L31.5 12.5 L15 24.5 L9 21 L9.5 16 Z" fill="#9088c8"/><path d="M28 10 L10 16.5 M29 11 L11 20 M30 12 L13 23 M29.5 12.5 L16 24.5" stroke="#c8c0ec" stroke-width="0.8"/><g transform="rotate(25 46 18.5)"><rect x="37" y="14.5" width="18" height="8" rx="1.5" fill="#d6a93a"/><path d="M37 14 L33.5 13 V24 L37 23 Z M55 14 L58.5 13 V24 L55 23 Z" fill="#c9962a"/><circle cx="46" cy="18.5" r="2.2" fill="#f4e8c0"/></g><circle cx="11" cy="7" r="1" fill="#d6a93a"/><circle cx="57" cy="4.5" r="1.1" fill="#d6a93a"/><circle cx="55" cy="12" r="1.1" fill="#d6a93a"/><circle cx="19" cy="25" r="1" fill="#d6a93a"/><circle cx="28" cy="20" r="1" fill="#d6a93a"/><circle cx="18.5" cy="4.5" r="1" fill="#b0a8d8"/><circle cx="48" cy="11" r="1" fill="#b0a8d8"/><circle cx="32" cy="22" r="1" fill="#b0a8d8"/></svg>
<svg class="a" style="left:284.5px;top:690px" width="16" height="16" viewBox="0 0 16 16"><rect x="0.5" y="0.5" width="15" height="15" rx="7" fill="#4a8cf7"/><rect x="3.5" y="5" width="6.5" height="6" rx="1" fill="#fff"/><path d="M10.5 7 L13 5.5 V10.5 L10.5 9 Z" fill="#fff"/></svg>
<svg class="a" style="left:318.5px;top:690px" width="16" height="16" viewBox="0 0 16 16"><rect x="4" y="1" width="12" height="14" rx="1" fill="#21a366"/><rect x="0" y="3" width="9" height="10" rx="1" fill="#107c41"/><path d="M2.5 5 L6.5 11 M6.5 5 L2.5 11" stroke="#fff" stroke-width="1.3"/></svg>
<svg class="a" style="left:353px;top:690px" width="16" height="16" viewBox="0 0 16 16"><rect x="0" y="0" width="16" height="16" rx="2" fill="#4a4a4a"/><path d="M11.5 3 L4.5 6 L11.5 9.5 L4.5 13" stroke="#f0a020" stroke-width="2.4" fill="none"/></svg>
<svg class="a" style="left:387px;top:690px" width="16" height="16" viewBox="0 0 16 16"><rect x="0" y="0" width="16" height="16" rx="2" fill="#e8762b"/><path d="M4 4 C6 3 10 3 12 4 C11 6 11 10 12 12 C10 13 6 13 4 12 C5 10 5 6 4 4 Z" stroke="#fff" stroke-width="1.6" fill="none"/></svg>
<svg class="a" style="left:422px;top:690px" width="16" height="16" viewBox="0 0 16 16"><rect x="0" y="0" width="16" height="16" fill="#1a3a8a"/><rect x="0" y="0" width="16" height="8" fill="#8aa4d8"/><text x="8" y="7" font-size="6.5" font-family="Liberation Sans" font-weight="bold" fill="#1a2a6a" text-anchor="middle">DEV</text><text x="8" y="14.5" font-size="7" font-family="Liberation Sans" font-weight="bold" fill="#5aa0ff" text-anchor="middle">C++</text></svg>
<svg class="a" style="left:456px;top:690px" width="16" height="16" viewBox="0 0 16 16"><rect x="0" y="0" width="16" height="16" rx="2" fill="#3a6e99"/><path d="M3 3 C8 4 11 8 13 13 M5 3 C9 6 10 9 11 13" stroke="#b8d0e0" stroke-width="0.8" fill="none"/></svg>
<svg class="a" style="left:490px;top:690px" width="16" height="16" viewBox="0 0 16 16"><rect x="0" y="0" width="16" height="16" fill="#ef443b"/><path d="M5 8 L8 5 L11 8 L8 11 Z" fill="#fff"/><path d="M9.5 5.5 L12 8 L9.5 10.5" stroke="#fff" stroke-width="1.2" fill="none"/></svg>
<svg class="a" style="left:524px;top:690px" width="16" height="16" viewBox="0 0 16 16"><circle cx="8" cy="8" r="8" fill="#db4437"/><path d="M8 8 L1.1 12 A8 8 0 0 0 8 16 A8 8 0 0 0 14.9 12 L12 6 Z" fill="#0f9d58"/><path d="M8 0 A8 8 0 0 1 15.9 9 L12 8 Z" fill="#ffcd40"/><circle cx="8" cy="8" r="3.6" fill="#fff"/><circle cx="8" cy="8" r="2.8" fill="#4285f4"/></svg>
<div class="a" style="left:549.5px;top:684px;width:33px;height:27px;background:#3b3b3b"></div>
<svg class="a" style="left:558px;top:690px" width="16" height="16" viewBox="0 0 16 16"><path d="M11.8 0.3 L15.8 2.2 V13.8 L11.8 15.7 Z" fill="#3aa8f0"/><path d="M12.5 1.2 L2 10.5" stroke="#2f9be6" stroke-width="2.6" stroke-linecap="round"/><path d="M12.5 14.8 L2 5.5" stroke="#2b93dc" stroke-width="2.6" stroke-linecap="round"/></svg>
<svg class="a" style="left:593px;top:690px" width="16" height="16" viewBox="0 0 16 16"><path d="M0 3 H6 L7.5 4.5 H16 V14 H0 Z" fill="#f6c344"/><rect x="0" y="6" width="16" height="8" fill="#ffd766"/><rect x="5" y="10" width="6" height="2" fill="#2a7fd4"/><rect x="7" y="10" width="2" height="6" fill="#2a7fd4"/></svg>
<svg class="a" style="left:627.5px;top:690px" width="16" height="16" viewBox="0 0 16 16"><rect x="0.5" y="2" width="15" height="12" rx="3" fill="#c8dcf8" stroke="#6a9ae0" stroke-width="1"/><circle cx="8" cy="8" r="3" fill="#3a4aa8"/></svg>
<svg class="a" style="left:661.5px;top:690px" width="16" height="16" viewBox="0 0 16 16"><rect x="1" y="1" width="12" height="15" fill="#e8f0d8"/><path d="M3 5 H11 M3 8 H11 M3 11 H9" stroke="#8ab060" stroke-width="1"/><path d="M7 13 L15 2" stroke="#5a9a2a" stroke-width="2"/><rect x="1" y="13" width="8" height="3" fill="#7ab040"/></svg>
<div class="a" style="left:519px;top:709px;width:26.0px;height:2px;background:#a6d8f0"></div>
<div class="a" style="left:549.5px;top:709px;width:33.0px;height:2px;background:#a6d8f0"></div>
<div class="a" style="left:587.7px;top:709px;width:25.3px;height:2px;background:#a6d8f0"></div>
<div class="a" style="left:621.6px;top:709px;width:26.1px;height:2px;background:#a6d8f0"></div>
<div class="a" style="left:655.8px;top:709px;width:26.2px;height:2px;background:#a6d8f0"></div>
<svg class="a" style="left:884px;top:685px" width="25" height="23" viewBox="0 0 25 23"><circle cx="13.2" cy="12.5" r="9.3" fill="#f2b030"/><path d="M4 16 A9.3 9.3 0 0 0 14 21.8 L10 14 Z" fill="#f08a20"/><circle cx="8.3" cy="7.8" r="8.2" fill="#1c1c1c"/><path d="M2.5 9 C0.5 9 0.5 5.5 3 5.5 C3.5 2.5 7 1 9 3 C10.5 1.5 13.5 2.5 13.5 5.5 C15 6 14.5 9 13 9 Z" fill="#cfe0fa"/><path d="M12.5 20.5 C10.5 20.5 10.5 17 13 17 C13.5 14 17 12.5 19 14.5 C20.5 13 23.5 14 23.5 17 C25 17.5 24.5 20.5 23 20.5 Z" fill="#cfe0fa"/></svg>
<span class="a" style="left:915px;top:689px;font-size:13.5px;color:#ffffff;transform:scaleX(0.8630);transform-origin:0 0">17°C</span>
<span class="a" style="left:950.7px;top:689px;font-size:13.5px;color:#ffffff;transform:scaleX(0.9144);transform-origin:0 0">Partly clo...</span>
<svg class="a" style="left:1020px;top:691px" width="14" height="9" viewBox="0 0 14 9" fill="none" stroke="#ffffff" stroke-width="1.2"><path d="M1 8 L7 1.5 L13 8"/></svg>
<svg class="a" style="left:1043px;top:689px" width="14" height="17" viewBox="0 0 14 17" fill="none" stroke="#ffffff" stroke-width="1.1"><rect x="1" y="4" width="8" height="9" rx="2"/><path d="M9 7 L12.5 5 V12 L9 10 M3 1.5 H7 M3 15.5 H7"/></svg>
<svg class="a" style="left:1066px;top:689px" width="13" height="14" viewBox="0 0 13 14" fill="none" stroke="#ffffff" stroke-width="1.1"><path d="M1 6 A11 11 0 0 1 12 2 M2.5 9 A8 8 0 0 1 12 5 M5 11.5 A5 5 0 0 1 12 8.5"/><circle cx="11.5" cy="12" r="1.2" fill="#ffffff"/></svg>
<svg class="a" style="left:1086px;top:689px" width="16" height="15" viewBox="0 0 16 15" fill="none" stroke="#ffffff" stroke-width="1.1"><path d="M1 5 H4 L8 1.5 V13.5 L4 10 H1 Z M10.5 5 C11.5 6.5 11.5 8.5 10.5 10 M12.5 3 C14.5 5.5 14.5 9.5 12.5 12"/></svg>
<svg class="a" style="left:1109px;top:690px" width="15" height="13" viewBox="0 0 15 13" fill="none" stroke="#ffffff" stroke-width="1.1"><rect x="4" y="4" width="9.5" height="7"/><rect x="5.5" y="5.5" width="5" height="4" fill="#ffffff"/><path d="M1 2 L3 5 H1 L3 8"/></svg>
<span class="a" style="left:1132.5px;top:690px;font-size:11.5px;color:#ffffff;transform:scaleX(0.8265);transform-origin:0 0">ENG</span>
<span class="a" style="left:1168px;top:690px;font-size:12px;color:#ffffff;transform:scaleX(0.8730);transform-origin:0 0">6:47 PM</span>
<svg class="a" style="left:1227px;top:689px" width="17" height="17" viewBox="0 0 17 17"><path d="M0.5 0.5 H16.5 V12.5 H10 L8.5 15 L7 12.5 H0.5 Z" fill="#fff"/><path d="M3 4 H14 M3 6.5 H14 M3 9 H9" stroke="#333" stroke-width="1"/></svg>
<div class="a" style="left:1261px;top:684px;width:1px;height:27px;background:#777"></div>
<div class="a" style="left:469px;top:636px;width:328px;height:39px;background:rgba(255,255,255,0.95);box-shadow:0 1px 3px rgba(0,0,0,0.3)"></div>
<div class="a" style="left:478px;top:650px;width:1.2px;height:10px;background:#b4b4b4"></div>
<div class="a" style="left:482px;top:650px;width:1.2px;height:10px;background:#b4b4b4"></div>
<span class="a" style="left:493.5px;top:648px;font-size:12px;color:#3c4043;transform:scaleX(0.8970);transform-origin:0 0">srilance.lk is sharing your screen.</span>
<div class="a" style="left:662px;top:641px;width:93.5px;height:29px;background:#1a73e8;border-radius:4px"></div>
<span class="a" style="left:677px;top:648px;font-size:12.5px;font-weight:bold;color:#ffffff;transform:scaleX(0.8260);transform-origin:0 0">Stop sharing</span>
<span class="a" style="left:765px;top:648px;font-size:12.5px;color:#4a7fe0;transform:scaleX(0.9000);transform-origin:0 0">Hide</span>
</body></html>
